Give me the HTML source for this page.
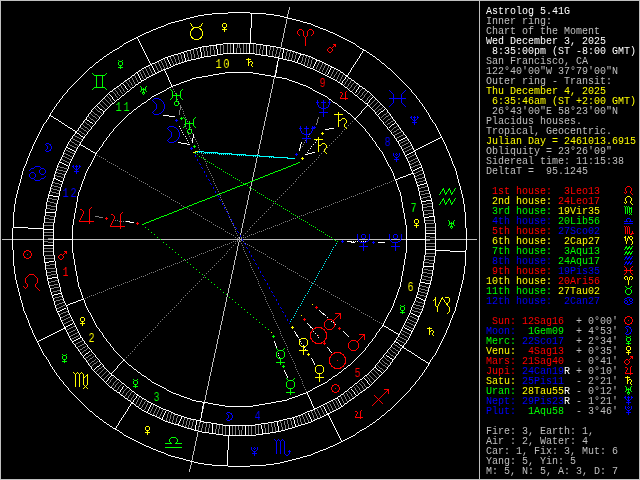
<!DOCTYPE html>
<html><head><meta charset="utf-8"><title>Astrolog 5.41G</title>
<style>
html,body{margin:0;padding:0;background:#000;overflow:hidden}
#w{position:relative;width:640px;height:480px;background:#000;overflow:hidden}
svg{position:absolute;left:0;top:0}
svg path{fill:none;stroke-width:1;shape-rendering:crispEdges}
.h{position:absolute;width:41px;height:17px;line-height:17px;text-align:center;font-family:"Liberation Mono",monospace;font-weight:normal;font-size:13.5px;transform:scaleX(0.75);will-change:transform;letter-spacing:2.5px;text-indent:2.5px}
pre{position:absolute;left:486px;top:7px;margin:0;font-family:"Liberation Mono",monospace;font-size:10px;line-height:10px;color:#bfbfbf;white-space:pre;will-change:transform}
</style></head><body><div id="w">
<svg width="640" height="480" viewBox="0 0 640 480">
<g transform="translate(0,0.5)">
<path stroke="rgb(255,255,255)" d="M228 12h22M212 13h16M250 13h16M204 14h8M251 14h1M266 14h8M198 15h6M251 15h1M274 15h6M194 16h4M251 16h1M280 16h4M190 17h4M251 17h1M284 17h4M186 18h4M251 18h1M288 18h4M183 19h3M251 19h1M292 19h4M179 20h4M251 20h1M296 20h4M175 21h4M251 21h1M300 21h3M171 22h4M251 22h1M303 22h4M168 23h3M251 23h1M307 23h4M166 24h2M251 24h1M311 24h2M164 25h2M251 25h1M313 25h2M161 26h3M251 26h1M315 26h3M158 27h3M251 27h1M318 27h2M156 28h2M250 28h1M320 28h3M153 29h3M250 29h1M323 29h3M151 30h2M250 30h1M326 30h2M149 31h2M250 31h1M328 31h2M146 32h3M250 32h1M330 32h3M144 33h2M250 33h1M333 33h2M142 34h2M250 34h1M335 34h2M140 35h2M250 35h1M337 35h2M138 36h2M250 36h1M339 36h2M136 37h2M250 37h1M341 37h2M134 38h2M137 38h1M250 38h1M343 38h2M132 39h2M138 39h1M250 39h1M345 39h2M130 40h2M138 40h1M250 40h1M347 40h2M128 41h2M139 41h1M250 41h1M349 41h2M126 42h2M139 42h1M250 42h1M351 42h2M124 43h2M140 43h1M223 43h33M353 43h2M123 44h1M140 44h1M216 44h7M233 44h1M249 44h1M256 44h7M355 44h1M122 45h1M141 45h1M209 45h8M233 45h1M249 45h1M263 45h7M356 45h1M120 46h2M141 46h1M202 46h7M216 46h1M233 46h1M249 46h1M266 46h1M270 46h6M357 46h2M119 47h1M142 47h1M198 47h4M216 47h1M233 47h1M249 47h1M266 47h1M276 47h5M359 47h1M117 48h2M142 48h1M194 48h4M200 48h1M216 48h1M233 48h1M249 48h1M266 48h1M281 48h4M360 48h2M115 49h2M143 49h1M191 49h3M200 49h1M217 49h1M233 49h1M249 49h1M266 49h1M283 49h1M285 49h3M362 49h2M113 50h2M143 50h1M187 50h4M200 50h1M217 50h1M233 50h1M249 50h1M266 50h1M283 50h1M288 50h4M363 50h3M112 51h1M144 51h1M184 51h3M200 51h1M217 51h1M233 51h1M249 51h1M266 51h1M283 51h1M292 51h3M362 51h1M366 51h1M110 52h2M144 52h1M181 52h3M201 52h1M217 52h1M233 52h1M249 52h1M266 52h1M283 52h1M295 52h3M362 52h1M367 52h2M109 53h1M145 53h1M178 53h3M183 53h1M201 53h1M217 53h1M223 53h32M266 53h1M282 53h1M298 53h3M361 53h1M369 53h1M107 54h2M145 54h1M174 54h4M184 54h1M201 54h1M217 54h6M255 54h6M266 54h1M282 54h1M300 54h5M360 54h1M370 54h2M106 55h1M146 55h1M171 55h3M184 55h1M201 55h1M211 55h6M261 55h7M282 55h1M300 55h1M305 55h3M360 55h1M372 55h1M104 56h2M146 56h1M168 56h3M184 56h1M201 56h1M204 56h7M268 56h6M282 56h1M299 56h1M308 56h3M359 56h1M373 56h2M103 57h1M147 57h1M165 57h3M184 57h1M200 57h4M274 57h5M282 57h1M299 57h1M311 57h2M359 57h1M375 57h1M102 58h1M147 58h1M163 58h2M167 58h1M185 58h1M196 58h4M278 58h5M298 58h1M313 58h2M358 58h1M376 58h1M100 59h2M148 59h1M161 59h2M167 59h1M185 59h1M191 59h5M278 59h1M283 59h4M298 59h1M315 59h2M357 59h1M377 59h2M99 60h1M148 60h1M159 60h2M168 60h1M185 60h1M187 60h4M278 60h1M287 60h5M297 60h1M316 60h4M357 60h1M379 60h1M98 61h1M149 61h1M157 61h2M168 61h1M184 61h3M277 61h1M292 61h3M297 61h1M316 61h1M320 61h2M356 61h1M380 61h1M96 62h2M149 62h1M155 62h2M169 62h1M181 62h3M277 62h1M295 62h3M315 62h1M322 62h2M355 62h1M381 62h1M95 63h1M150 63h1M152 63h3M169 63h1M178 63h3M277 63h1M298 63h3M315 63h1M324 63h2M355 63h1M382 63h2M94 64h1M150 64h2M170 64h1M175 64h3M277 64h1M301 64h2M314 64h1M326 64h2M354 64h1M384 64h1M93 65h1M148 65h2M151 65h1M170 65h1M173 65h2M277 65h1M303 65h2M314 65h1M328 65h2M353 65h1M385 65h1M92 66h1M146 66h2M152 66h1M171 66h2M277 66h1M305 66h2M313 66h1M330 66h2M353 66h1M386 66h1M90 67h2M144 67h2M152 67h1M169 67h2M276 67h1M307 67h3M313 67h1M331 67h3M352 67h1M387 67h1M89 68h1M142 68h2M153 68h1M166 68h3M276 68h1M310 68h3M330 68h1M334 68h2M351 68h1M388 68h2M88 69h1M141 69h1M153 69h1M163 69h3M276 69h1M313 69h2M330 69h1M336 69h2M351 69h1M390 69h1M87 70h1M139 70h2M154 70h1M161 70h2M164 70h1M276 70h1M315 70h2M329 70h1M338 70h2M350 70h1M391 70h1M86 71h1M138 71h1M154 71h1M159 71h2M165 71h1M276 71h1M317 71h2M329 71h1M340 71h1M350 71h1M392 71h1M85 72h1M136 72h2M155 72h1M157 72h2M165 72h1M225 72h28M276 72h1M319 72h2M328 72h1M341 72h2M349 72h1M393 72h1M84 73h1M135 73h1M137 73h1M155 73h2M166 73h1M219 73h6M253 73h6M275 73h1M321 73h2M328 73h1M343 73h1M348 73h1M394 73h1M83 74h1M134 74h1M138 74h1M153 74h2M166 74h1M213 74h6M259 74h6M275 74h1M323 74h2M327 74h1M344 74h1M348 74h1M395 74h1M82 75h1M132 75h2M138 75h1M151 75h2M167 75h1M208 75h5M265 75h6M275 75h1M325 75h2M345 75h3M396 75h1M81 76h1M131 76h1M139 76h1M149 76h2M167 76h1M202 76h6M271 76h5M327 76h2M346 76h2M397 76h1M80 77h1M130 77h1M139 77h1M147 77h2M168 77h1M196 77h6M276 77h6M329 77h2M345 77h1M348 77h1M398 77h1M79 78h1M128 78h2M140 78h1M146 78h1M168 78h1M192 78h4M282 78h5M331 78h2M345 78h1M349 78h2M399 78h1M78 79h1M127 79h1M140 79h1M144 79h2M168 79h1M190 79h2M287 79h2M333 79h2M344 79h1M351 79h1M400 79h1M77 80h1M125 80h2M141 80h3M169 80h1M187 80h3M289 80h3M335 80h2M343 80h1M352 80h2M401 80h1M76 81h1M124 81h1M141 81h1M169 81h1M184 81h3M292 81h3M337 81h1M342 81h1M354 81h1M402 81h1M75 82h1M123 82h1M139 82h2M170 82h1M181 82h3M295 82h3M338 82h2M342 82h1M355 82h1M403 82h1M74 83h1M121 83h2M138 83h1M170 83h1M179 83h2M298 83h2M340 83h2M356 83h2M404 83h1M73 84h1M120 84h1M123 84h1M136 84h2M171 84h1M176 84h3M300 84h3M341 84h2M358 84h1M405 84h1M72 85h1M119 85h1M124 85h1M135 85h1M171 85h1M173 85h3M303 85h3M343 85h1M359 85h1M406 85h1M71 86h1M117 86h2M125 86h1M134 86h1M171 86h2M306 86h2M344 86h1M359 86h3M407 86h1M70 87h1M116 87h1M125 87h1M132 87h2M169 87h2M308 87h2M345 87h2M358 87h1M362 87h1M408 87h1M69 88h1M114 88h2M126 88h1M131 88h1M167 88h2M310 88h2M347 88h1M358 88h1M363 88h2M409 88h1M68 89h1M113 89h1M127 89h1M130 89h1M166 89h1M312 89h1M348 89h1M357 89h1M365 89h1M410 89h1M67 90h1M112 90h1M129 90h1M164 90h2M313 90h2M349 90h1M356 90h1M366 90h1M411 90h1M67 91h1M110 91h2M127 91h2M162 91h2M315 91h2M350 91h2M356 91h1M367 91h2M411 91h1M66 92h1M109 92h1M126 92h1M160 92h2M317 92h2M352 92h1M355 92h1M369 92h1M412 92h1M65 93h1M108 93h1M125 93h1M158 93h2M319 93h2M353 93h1M370 93h1M413 93h1M64 94h1M107 94h1M109 94h1M124 94h1M156 94h2M321 94h2M354 94h1M371 94h1M414 94h1M63 95h1M106 95h1M110 95h1M122 95h2M154 95h2M323 95h2M355 95h2M372 95h1M415 95h1M62 96h1M105 96h1M111 96h1M121 96h1M152 96h2M325 96h2M357 96h1M373 96h1M416 96h1M62 97h1M104 97h1M112 97h1M120 97h1M151 97h1M327 97h1M358 97h1M372 97h1M374 97h1M416 97h1M61 98h1M103 98h1M112 98h1M119 98h1M150 98h1M328 98h1M359 98h1M371 98h1M375 98h1M417 98h1M60 99h1M102 99h1M113 99h1M117 99h2M148 99h2M329 99h2M360 99h2M370 99h1M376 99h1M418 99h1M59 100h1M101 100h1M114 100h1M116 100h1M147 100h1M331 100h1M362 100h1M369 100h1M377 100h1M419 100h1M59 101h1M100 101h1M115 101h1M146 101h1M332 101h1M363 101h1M369 101h1M378 101h1M419 101h1M58 102h1M99 102h1M114 102h1M144 102h2M333 102h2M364 102h1M368 102h1M379 102h1M420 102h1M57 103h1M98 103h1M112 103h2M142 103h2M335 103h2M365 103h3M380 103h1M421 103h1M56 104h1M97 104h1M111 104h1M141 104h1M337 104h1M367 104h1M381 104h1M422 104h1M56 105h1M96 105h1M110 105h1M140 105h1M338 105h1M367 105h2M382 105h1M422 105h1M55 106h1M95 106h1M97 106h1M109 106h1M138 106h2M339 106h2M366 106h1M369 106h1M383 106h1M423 106h1M54 107h1M94 107h1M98 107h1M108 107h1M137 107h1M341 107h1M365 107h1M370 107h1M384 107h1M424 107h1M54 108h1M93 108h1M99 108h1M107 108h1M136 108h1M342 108h1M364 108h1M371 108h1M385 108h1M424 108h1M53 109h1M92 109h1M100 109h2M106 109h1M134 109h2M343 109h1M363 109h1M372 109h1M384 109h1M386 109h1M425 109h1M52 110h1M91 110h1M102 110h1M105 110h1M133 110h1M344 110h2M362 110h1M373 110h1M383 110h1M387 110h1M426 110h1M52 111h1M91 111h1M103 111h2M132 111h1M346 111h1M361 111h1M374 111h1M381 111h2M387 111h1M426 111h1M51 112h1M90 112h1M103 112h1M131 112h1M347 112h1M361 112h1M375 112h1M380 112h1M388 112h1M427 112h1M50 113h1M89 113h1M103 113h1M129 113h2M348 113h2M360 113h1M375 113h1M379 113h1M389 113h1M428 113h1M50 114h1M88 114h1M102 114h1M128 114h1M350 114h1M359 114h1M376 114h1M378 114h1M390 114h1M428 114h1M49 115h2M88 115h1M101 115h1M127 115h1M163 115h6M351 115h1M358 115h1M377 115h1M390 115h1M429 115h1M49 116h1M51 116h2M87 116h1M100 116h1M126 116h1M169 116h6M352 116h1M357 116h1M378 116h1M391 116h1M429 116h1M48 117h1M53 117h1M86 117h1M99 117h1M125 117h1M353 117h1M356 117h1M379 117h1M392 117h1M430 117h1M48 118h1M54 118h2M86 118h1M99 118h1M124 118h1M354 118h2M379 118h1M392 118h1M430 118h1M47 119h1M56 119h2M85 119h2M98 119h1M123 119h1M355 119h1M380 119h1M393 119h1M431 119h1M46 120h1M58 120h1M84 120h1M87 120h2M97 120h1M122 120h1M356 120h1M381 120h1M394 120h1M432 120h1M46 121h1M59 121h2M83 121h1M89 121h1M96 121h1M121 121h1M357 121h1M382 121h1M395 121h1M432 121h1M45 122h1M61 122h1M83 122h1M90 122h2M95 122h1M120 122h1M358 122h1M383 122h1M395 122h1M433 122h1M44 123h1M62 123h2M82 123h1M92 123h1M95 123h1M119 123h1M359 123h1M383 123h1M394 123h1M396 123h1M434 123h1M43 124h1M64 124h1M81 124h1M94 124h1M118 124h1M360 124h1M384 124h1M392 124h2M397 124h1M435 124h1M43 125h1M65 125h2M80 125h1M93 125h1M117 125h1M361 125h1M385 125h1M391 125h1M398 125h1M435 125h1M42 126h1M67 126h1M80 126h1M92 126h1M116 126h1M179 126h1M362 126h1M386 126h1M390 126h1M398 126h1M436 126h1M42 127h1M68 127h2M79 127h1M91 127h1M115 127h1M363 127h1M387 127h1M389 127h1M399 127h1M436 127h1M41 128h1M70 128h2M78 128h1M91 128h1M114 128h1M180 128h1M329 128h5M364 128h1M387 128h1M400 128h1M437 128h1M41 129h1M72 129h1M78 129h1M90 129h1M113 129h1M325 129h4M365 129h1M388 129h1M400 129h1M437 129h1M40 130h1M73 130h2M77 130h1M89 130h1M113 130h1M181 130h1M365 130h1M389 130h1M401 130h1M438 130h1M40 131h1M75 131h2M88 131h1M112 131h1M366 131h1M390 131h1M402 131h1M438 131h1M39 132h1M75 132h2M87 132h1M111 132h1M182 132h1M367 132h1M391 132h1M403 132h1M439 132h1M39 133h1M75 133h1M77 133h2M87 133h1M110 133h1M368 133h1M391 133h1M403 133h1M439 133h1M38 134h1M74 134h1M79 134h1M86 134h1M109 134h1M183 134h1M193 134h1M369 134h1M392 134h1M404 134h1M440 134h1M38 135h1M73 135h1M80 135h1M85 135h1M109 135h1M193 135h1M369 135h1M393 135h1M405 135h1M440 135h1M37 136h1M72 136h1M81 136h2M84 136h1M108 136h1M185 136h1M193 136h1M370 136h1M394 136h1M406 136h1M441 136h1M37 137h1M72 137h1M83 137h2M107 137h1M193 137h1M371 137h1M394 137h1M405 137h2M440 137h2M36 138h1M71 138h1M83 138h1M106 138h1M186 138h1M192 138h1M372 138h1M395 138h1M403 138h2M407 138h1M438 138h2M442 138h1M36 139h1M70 139h1M82 139h1M106 139h1M192 139h1M372 139h1M396 139h1M401 139h2M408 139h1M436 139h2M442 139h1M35 140h1M70 140h1M82 140h1M105 140h1M187 140h1M192 140h1M316 140h1M373 140h1M396 140h1M399 140h2M408 140h1M434 140h2M443 140h1M35 141h1M69 141h1M81 141h1M104 141h1M192 141h1M374 141h1M397 141h2M409 141h1M432 141h2M443 141h1M34 142h1M68 142h1M80 142h1M103 142h1M178 142h3M188 142h1M192 142h1M301 142h1M315 142h1M375 142h1M398 142h1M410 142h1M430 142h2M444 142h1M34 143h1M68 143h1M80 143h1M103 143h1M181 143h6M301 143h1M375 143h1M398 143h1M410 143h1M428 143h2M444 143h1M33 144h1M67 144h1M79 144h2M102 144h1M187 144h3M300 144h1M313 144h1M376 144h1M399 144h1M411 144h1M426 144h2M445 144h1M33 145h1M67 145h1M79 145h1M81 145h2M102 145h1M300 145h1M376 145h1M399 145h1M411 145h1M424 145h2M445 145h1M32 146h1M66 146h1M78 146h1M83 146h2M101 146h1M300 146h1M311 146h1M377 146h1M400 146h1M412 146h1M422 146h2M446 146h1M32 147h1M66 147h2M77 147h1M85 147h1M100 147h1M300 147h1M378 147h1M401 147h1M412 147h1M420 147h2M446 147h1M32 148h1M65 148h1M68 148h2M77 148h1M86 148h2M99 148h1M299 148h1M310 148h1M379 148h1M401 148h1M413 148h1M418 148h2M446 148h1M31 149h1M65 149h1M70 149h2M76 149h1M88 149h2M99 149h1M299 149h1M379 149h1M402 149h1M413 149h1M416 149h2M447 149h1M31 150h1M64 150h1M72 150h2M76 150h1M90 150h1M98 150h1M299 150h1M308 150h1M380 150h1M402 150h1M414 150h2M447 150h1M30 151h1M64 151h1M74 151h2M91 151h2M97 151h1M381 151h1M403 151h1M413 151h2M448 151h1M30 152h1M63 152h1M75 152h1M93 152h2M96 152h1M307 152h1M312 152h3M382 152h1M403 152h1M411 152h2M415 152h1M448 152h1M29 153h1M63 153h1M74 153h1M95 153h2M308 153h4M382 153h1M404 153h1M409 153h2M415 153h1M449 153h1M29 154h1M63 154h1M74 154h1M95 154h1M305 154h3M383 154h1M404 154h1M407 154h2M415 154h1M449 154h1M29 155h1M62 155h1M73 155h1M95 155h1M383 155h1M405 155h2M416 155h1M449 155h1M28 156h1M62 156h1M73 156h1M94 156h1M384 156h1M405 156h1M416 156h1M450 156h1M28 157h1M61 157h1M72 157h1M94 157h1M384 157h1M406 157h1M417 157h1M450 157h1M27 158h1M61 158h1M72 158h1M93 158h1M385 158h1M406 158h1M417 158h1M451 158h1M27 159h1M60 159h1M71 159h1M93 159h1M385 159h1M407 159h1M418 159h1M451 159h1M27 160h1M60 160h1M71 160h1M92 160h1M386 160h1M407 160h1M418 160h1M451 160h1M26 161h1M59 161h1M70 161h1M92 161h1M386 161h1M408 161h1M419 161h1M452 161h1M26 162h1M59 162h3M70 162h1M91 162h1M387 162h1M408 162h1M419 162h1M452 162h1M26 163h1M58 163h1M62 163h2M69 163h1M91 163h1M387 163h1M409 163h1M420 163h1M452 163h1M25 164h1M58 164h1M64 164h2M69 164h1M90 164h1M388 164h1M409 164h1M420 164h1M453 164h1M25 165h1M57 165h1M66 165h2M69 165h1M90 165h1M388 165h1M409 165h1M421 165h1M453 165h1M24 166h1M57 166h1M68 166h1M89 166h1M389 166h1M410 166h1M421 166h1M454 166h1M24 167h1M57 167h1M68 167h1M88 167h1M390 167h1M410 167h1M419 167h3M454 167h1M23 168h1M56 168h1M68 168h1M88 168h1M390 168h1M410 168h1M417 168h2M422 168h1M455 168h1M23 169h1M56 169h1M67 169h1M87 169h1M391 169h1M411 169h1M415 169h2M422 169h1M455 169h1M23 170h1M56 170h1M67 170h1M87 170h1M391 170h1M411 170h1M413 170h2M422 170h1M455 170h1M22 171h1M55 171h1M66 171h1M86 171h1M392 171h1M412 171h1M423 171h1M456 171h1M22 172h1M55 172h1M66 172h1M86 172h1M392 172h1M412 172h1M423 172h1M456 172h1M22 173h1M55 173h1M65 173h1M85 173h1M393 173h1M411 173h3M423 173h1M456 173h1M22 174h1M54 174h1M65 174h1M85 174h1M393 174h1M408 174h3M413 174h1M424 174h1M456 174h1M21 175h1M54 175h1M64 175h1M85 175h1M393 175h1M406 175h2M414 175h1M424 175h1M457 175h1M21 176h1M54 176h1M64 176h1M84 176h1M394 176h1M403 176h3M414 176h1M424 176h1M457 176h1M21 177h1M54 177h1M64 177h1M84 177h1M394 177h1M400 177h3M414 177h1M424 177h1M457 177h1M21 178h1M53 178h3M63 178h1M84 178h1M394 178h1M398 178h2M415 178h1M425 178h1M457 178h1M20 179h1M53 179h1M56 179h2M63 179h1M83 179h1M395 179h3M415 179h1M425 179h1M458 179h1M20 180h1M53 180h1M58 180h2M63 180h1M83 180h1M395 180h1M415 180h1M425 180h1M458 180h1M20 181h1M52 181h1M60 181h3M82 181h1M396 181h1M416 181h1M426 181h1M458 181h1M20 182h1M52 182h1M62 182h1M82 182h1M396 182h1M416 182h1M426 182h1M458 182h1M19 183h1M52 183h1M62 183h1M82 183h1M396 183h1M416 183h1M424 183h3M459 183h1M19 184h1M51 184h1M61 184h1M81 184h1M397 184h1M417 184h1M420 184h4M427 184h1M459 184h1M19 185h1M51 185h1M61 185h1M81 185h1M397 185h1M417 185h3M427 185h1M459 185h1M18 186h1M51 186h1M61 186h1M81 186h1M397 186h1M417 186h1M427 186h1M460 186h1M18 187h1M50 187h1M60 187h1M80 187h1M398 187h1M418 187h1M428 187h1M460 187h1M18 188h1M50 188h1M60 188h1M80 188h1M398 188h1M418 188h1M428 188h1M460 188h1M18 189h1M50 189h1M60 189h1M80 189h1M398 189h1M418 189h1M428 189h1M460 189h1M17 190h1M50 190h1M60 190h1M79 190h1M399 190h1M418 190h1M428 190h1M461 190h1M17 191h1M49 191h1M59 191h1M79 191h1M399 191h1M419 191h1M429 191h1M461 191h1M17 192h1M49 192h1M59 192h1M78 192h1M400 192h1M419 192h1M429 192h1M461 192h1M17 193h1M49 193h1M59 193h1M78 193h1M400 193h1M419 193h1M429 193h1M461 193h1M16 194h1M48 194h1M59 194h1M78 194h1M400 194h1M419 194h1M430 194h1M462 194h1M16 195h1M48 195h5M59 195h1M78 195h1M400 195h1M419 195h1M430 195h1M462 195h1M16 196h1M48 196h1M53 196h6M77 196h1M401 196h1M420 196h1M430 196h1M462 196h1M16 197h1M48 197h1M58 197h1M77 197h1M401 197h1M420 197h1M430 197h1M462 197h1M15 198h1M47 198h1M58 198h1M77 198h1M401 198h1M420 198h1M431 198h1M463 198h1M15 199h1M47 199h1M58 199h1M77 199h1M401 199h1M420 199h1M431 199h1M463 199h1M15 200h1M47 200h1M57 200h1M77 200h1M401 200h1M421 200h1M426 200h6M463 200h1M15 201h1M47 201h1M57 201h1M77 201h1M401 201h1M421 201h5M431 201h1M463 201h1M15 202h1M46 202h1M57 202h1M76 202h1M402 202h1M421 202h1M432 202h1M463 202h1M15 203h1M46 203h1M57 203h1M76 203h1M402 203h1M421 203h1M432 203h1M463 203h1M14 204h1M46 204h1M56 204h1M76 204h1M402 204h1M422 204h1M432 204h1M464 204h1M14 205h1M46 205h1M56 205h1M76 205h1M402 205h1M422 205h1M432 205h1M464 205h1M14 206h1M46 206h1M56 206h1M76 206h1M402 206h1M422 206h1M432 206h1M464 206h1M14 207h1M46 207h1M56 207h1M76 207h1M402 207h1M422 207h1M432 207h1M464 207h1M14 208h1M46 208h1M56 208h1M75 208h1M403 208h1M422 208h1M432 208h1M464 208h1M14 209h1M45 209h1M56 209h1M75 209h1M403 209h1M422 209h1M433 209h1M464 209h1M14 210h1M45 210h1M56 210h1M75 210h1M403 210h1M422 210h1M433 210h1M464 210h1M14 211h1M45 211h1M55 211h1M75 211h1M403 211h1M423 211h1M433 211h1M464 211h1M13 212h1M45 212h11M75 212h1M403 212h1M423 212h1M433 212h1M465 212h1M13 213h1M45 213h1M55 213h1M74 213h1M404 213h1M423 213h1M433 213h1M465 213h1M13 214h1M45 214h1M55 214h1M74 214h1M404 214h1M423 214h1M433 214h1M465 214h1M13 215h1M45 215h1M55 215h1M74 215h1M404 215h1M423 215h1M433 215h1M465 215h1M13 216h1M44 216h1M55 216h1M74 216h1M404 216h1M423 216h1M429 216h6M465 216h1M13 217h1M44 217h1M54 217h1M74 217h1M404 217h1M424 217h5M434 217h1M465 217h1M13 218h1M44 218h1M54 218h1M74 218h1M404 218h1M424 218h1M434 218h1M465 218h1M13 219h1M44 219h1M54 219h1M73 219h1M405 219h1M424 219h1M434 219h1M465 219h1M13 220h1M44 220h1M54 220h1M73 220h1M405 220h1M424 220h1M434 220h1M465 220h1M13 221h1M44 221h1M54 221h1M73 221h1M126 221h4M405 221h1M424 221h1M434 221h1M465 221h1M13 222h1M44 222h1M54 222h1M73 222h1M130 222h4M405 222h1M424 222h1M434 222h1M465 222h1M13 223h1M43 223h1M53 223h1M73 223h1M405 223h1M425 223h1M435 223h1M465 223h1M13 224h1M43 224h1M53 224h1M73 224h1M405 224h1M425 224h1M435 224h1M465 224h1M13 225h1M43 225h1M53 225h1M72 225h1M406 225h1M425 225h1M435 225h1M465 225h1M13 226h1M43 226h1M53 226h1M72 226h1M406 226h1M425 226h1M435 226h1M465 226h1M13 227h15M43 227h1M53 227h1M72 227h1M406 227h1M425 227h1M435 227h1M465 227h1M12 228h1M28 228h16M53 228h1M72 228h1M406 228h1M425 228h1M435 228h1M466 228h1M12 229h1M43 229h11M72 229h1M406 229h1M425 229h1M435 229h1M466 229h1M12 230h1M43 230h1M53 230h1M72 230h1M406 230h1M425 230h1M435 230h1M466 230h1M12 231h1M43 231h1M53 231h1M72 231h1M406 231h1M425 231h1M435 231h1M466 231h1M12 232h1M43 232h1M53 232h1M72 232h1M406 232h1M425 232h1M435 232h1M466 232h1M12 233h1M43 233h1M53 233h1M72 233h1M406 233h1M425 233h11M466 233h1M12 234h1M43 234h1M53 234h1M72 234h1M406 234h1M425 234h1M435 234h1M466 234h1M12 235h1M43 235h1M53 235h1M72 235h1M406 235h1M425 235h1M435 235h1M466 235h1M12 236h1M43 236h1M53 236h1M72 236h1M406 236h1M425 236h1M435 236h1M466 236h1M12 237h1M43 237h1M53 237h1M72 237h1M406 237h1M425 237h1M435 237h1M466 237h1M12 238h1M43 238h1M53 238h1M72 238h1M406 238h1M425 238h1M435 238h1M466 238h1M12 239h1M43 239h1M53 239h20M406 239h20M435 239h1M466 239h1M12 240h1M43 240h1M53 240h1M72 240h1M406 240h1M425 240h1M435 240h1M466 240h1M12 241h1M43 241h1M53 241h1M72 241h1M347 241h5M353 241h1M355 241h1M357 241h1M361 241h1M363 241h1M365 241h1M406 241h1M425 241h1M435 241h1M466 241h1M12 242h1M43 242h1M53 242h1M72 242h1M351 242h4M378 242h7M406 242h1M425 242h1M435 242h1M466 242h1M12 243h1M43 243h1M53 243h1M72 243h1M406 243h1M425 243h1M435 243h1M466 243h1M12 244h1M43 244h1M53 244h1M72 244h1M406 244h1M425 244h1M435 244h1M466 244h1M12 245h1M43 245h11M72 245h1M406 245h1M425 245h1M435 245h1M466 245h1M12 246h1M43 246h1M53 246h1M72 246h1M406 246h1M425 246h1M435 246h1M466 246h1M12 247h1M43 247h1M53 247h1M72 247h1M406 247h1M425 247h1M435 247h1M466 247h1M12 248h1M43 248h1M53 248h1M72 248h1M406 248h1M425 248h1M435 248h1M466 248h1M12 249h1M43 249h1M53 249h1M72 249h1M406 249h1M425 249h11M466 249h1M13 250h1M43 250h1M53 250h1M72 250h1M406 250h1M425 250h1M435 250h15M465 250h1M13 251h1M43 251h1M53 251h1M72 251h1M406 251h1M425 251h1M435 251h1M450 251h16M13 252h1M43 252h1M53 252h1M72 252h1M406 252h1M425 252h1M435 252h1M465 252h1M13 253h1M43 253h1M53 253h1M73 253h1M405 253h1M425 253h1M435 253h1M465 253h1M13 254h1M43 254h1M53 254h1M73 254h1M405 254h1M425 254h1M435 254h1M465 254h1M13 255h1M43 255h1M54 255h1M73 255h1M405 255h1M424 255h1M435 255h1M465 255h1M13 256h1M44 256h1M54 256h1M73 256h1M405 256h1M424 256h1M434 256h1M465 256h1M13 257h1M44 257h1M54 257h1M73 257h1M405 257h1M424 257h1M434 257h1M465 257h1M13 258h1M44 258h1M54 258h1M73 258h1M405 258h1M424 258h1M434 258h1M465 258h1M13 259h1M44 259h1M54 259h1M74 259h1M404 259h1M424 259h1M434 259h1M465 259h1M13 260h1M44 260h1M54 260h1M74 260h1M404 260h1M424 260h1M434 260h1M465 260h1M13 261h1M44 261h1M49 261h5M55 261h1M74 261h1M404 261h1M423 261h1M434 261h1M465 261h1M13 262h1M44 262h5M55 262h1M74 262h1M404 262h1M423 262h1M434 262h1M465 262h1M13 263h1M45 263h1M55 263h1M74 263h1M404 263h1M423 263h1M433 263h1M465 263h1M13 264h1M45 264h1M55 264h1M74 264h1M404 264h1M423 264h1M433 264h1M465 264h1M13 265h1M45 265h1M55 265h1M75 265h1M403 265h1M423 265h1M433 265h1M465 265h1M14 266h1M45 266h1M55 266h1M75 266h1M403 266h1M423 266h11M464 266h1M14 267h1M45 267h1M55 267h1M75 267h1M403 267h1M423 267h1M433 267h1M464 267h1M14 268h1M45 268h1M56 268h1M75 268h1M403 268h1M422 268h1M433 268h1M464 268h1M14 269h1M45 269h1M56 269h1M75 269h1M403 269h1M422 269h1M433 269h1M464 269h1M14 270h1M46 270h1M56 270h1M75 270h1M403 270h1M422 270h1M432 270h1M464 270h1M14 271h1M46 271h1M56 271h1M76 271h1M402 271h1M422 271h1M432 271h1M464 271h1M14 272h1M46 272h1M56 272h1M76 272h1M402 272h1M422 272h1M432 272h1M464 272h1M14 273h1M46 273h1M56 273h1M76 273h1M402 273h1M422 273h1M432 273h1M464 273h1M15 274h1M46 274h1M57 274h1M76 274h1M402 274h1M421 274h1M432 274h1M463 274h1M15 275h1M46 275h1M57 275h1M76 275h1M402 275h1M421 275h1M432 275h1M463 275h1M15 276h1M47 276h1M57 276h1M77 276h1M401 276h1M421 276h1M431 276h1M463 276h1M15 277h1M47 277h1M52 277h6M77 277h1M401 277h1M421 277h1M431 277h1M463 277h1M15 278h1M47 278h5M57 278h1M77 278h1M401 278h1M421 278h1M431 278h1M463 278h1M15 279h1M47 279h1M58 279h1M77 279h1M401 279h1M420 279h1M431 279h1M463 279h1M16 280h1M47 280h1M58 280h1M77 280h1M401 280h1M420 280h1M431 280h1M462 280h1M16 281h1M48 281h1M58 281h1M77 281h1M401 281h1M420 281h1M430 281h1M462 281h1M16 282h1M48 282h1M58 282h1M78 282h1M400 282h1M420 282h5M430 282h1M462 282h1M16 283h1M48 283h1M59 283h1M78 283h1M400 283h1M419 283h1M425 283h6M462 283h1M17 284h1M48 284h1M59 284h1M78 284h1M400 284h1M419 284h1M430 284h1M461 284h1M17 285h1M49 285h1M59 285h1M78 285h1M400 285h1M419 285h1M429 285h1M461 285h1M17 286h1M49 286h1M59 286h1M78 286h1M400 286h1M419 286h1M429 286h1M461 286h1M17 287h1M49 287h1M60 287h1M79 287h1M399 287h1M418 287h1M429 287h1M461 287h1M18 288h1M50 288h1M60 288h1M79 288h1M399 288h1M418 288h1M428 288h1M460 288h1M18 289h1M50 289h1M60 289h1M80 289h1M398 289h1M418 289h1M428 289h1M460 289h1M18 290h1M50 290h1M60 290h1M80 290h1M398 290h1M418 290h1M428 290h1M460 290h1M18 291h1M50 291h1M60 291h1M80 291h1M398 291h1M418 291h1M428 291h1M460 291h1M19 292h1M51 292h1M61 292h1M81 292h1M397 292h1M417 292h1M427 292h1M459 292h1M19 293h1M51 293h1M58 293h4M81 293h1M397 293h1M417 293h1M427 293h1M459 293h1M19 294h1M51 294h1M54 294h4M61 294h1M81 294h1M397 294h1M417 294h1M427 294h1M459 294h1M19 295h1M52 295h2M62 295h1M82 295h1M396 295h1M416 295h1M426 295h1M459 295h1M20 296h1M52 296h1M62 296h1M82 296h1M396 296h1M416 296h1M426 296h1M458 296h1M20 297h1M52 297h1M62 297h1M82 297h1M396 297h1M416 297h3M426 297h1M458 297h1M20 298h1M53 298h1M63 298h1M83 298h1M395 298h1M415 298h1M419 298h2M425 298h1M458 298h1M20 299h1M53 299h1M63 299h1M81 299h3M395 299h1M415 299h1M421 299h2M425 299h1M458 299h1M21 300h1M53 300h1M63 300h1M78 300h3M84 300h1M394 300h1M415 300h1M423 300h3M457 300h1M21 301h1M54 301h1M64 301h1M76 301h2M84 301h1M394 301h1M414 301h1M424 301h1M457 301h1M21 302h1M54 302h1M64 302h1M73 302h3M84 302h1M394 302h1M414 302h1M424 302h1M457 302h1M22 303h1M54 303h1M65 303h1M70 303h3M85 303h1M393 303h1M413 303h1M424 303h1M456 303h1M22 304h1M54 304h1M65 304h1M68 304h2M85 304h1M393 304h1M413 304h1M424 304h1M456 304h1M22 305h1M55 305h1M66 305h2M85 305h1M393 305h1M412 305h1M423 305h1M456 305h1M22 306h1M55 306h1M66 306h1M86 306h1M392 306h1M412 306h1M423 306h1M456 306h1M23 307h1M55 307h1M67 307h1M86 307h1M392 307h1M411 307h1M423 307h1M455 307h1M23 308h1M56 308h1M64 308h2M67 308h1M87 308h1M391 308h1M411 308h1M422 308h1M455 308h1M23 309h1M56 309h1M62 309h2M67 309h1M87 309h1M391 309h1M411 309h1M422 309h1M455 309h1M23 310h1M56 310h1M60 310h2M68 310h1M88 310h1M319 310h1M390 310h1M410 310h1M422 310h1M455 310h1M24 311h1M57 311h3M68 311h1M88 311h1M320 311h1M390 311h1M410 311h1M421 311h1M454 311h1M24 312h1M57 312h1M68 312h1M89 312h1M321 312h1M389 312h1M410 312h1M421 312h1M454 312h1M25 313h1M58 313h1M69 313h1M90 313h1M322 313h2M388 313h1M409 313h1M411 313h2M420 313h1M453 313h1M25 314h1M58 314h1M69 314h1M90 314h1M323 314h2M388 314h1M409 314h1M413 314h2M420 314h1M453 314h1M26 315h1M59 315h1M70 315h1M91 315h1M325 315h1M387 315h1M408 315h1M415 315h2M419 315h1M452 315h1M26 316h1M59 316h1M70 316h1M91 316h1M387 316h1M408 316h1M417 316h3M452 316h1M26 317h1M60 317h1M71 317h1M92 317h1M327 317h1M386 317h1M407 317h1M418 317h1M452 317h1M27 318h1M60 318h1M71 318h1M92 318h1M386 318h1M407 318h1M418 318h1M451 318h1M27 319h1M60 319h1M72 319h1M93 319h1M385 319h1M406 319h1M418 319h1M451 319h1M28 320h1M61 320h1M72 320h1M93 320h1M385 320h1M406 320h1M417 320h1M450 320h1M28 321h1M61 321h1M73 321h1M94 321h1M331 321h1M384 321h1M405 321h1M417 321h1M450 321h1M28 322h1M62 322h1M73 322h1M94 322h1M333 322h1M384 322h1M405 322h1M416 322h1M450 322h1M29 323h1M62 323h1M72 323h1M74 323h1M95 323h1M307 323h1M383 323h1M404 323h1M416 323h1M449 323h1M29 324h1M63 324h1M70 324h2M74 324h1M95 324h1M308 324h1M335 324h1M383 324h1M404 324h1M415 324h1M449 324h1M29 325h1M63 325h1M68 325h2M75 325h1M96 325h1M309 325h1M382 325h2M403 325h1M415 325h1M449 325h1M30 326h1M64 326h1M66 326h2M75 326h1M96 326h1M310 326h1M382 326h1M384 326h2M403 326h1M414 326h1M448 326h1M30 327h1M64 327h2M76 327h1M97 327h1M310 327h2M381 327h1M386 327h2M402 327h1M404 327h1M414 327h1M448 327h1M31 328h1M63 328h3M76 328h1M98 328h1M312 328h1M380 328h1M388 328h1M402 328h1M405 328h2M413 328h1M447 328h1M31 329h1M61 329h2M65 329h1M77 329h1M99 329h1M379 329h1M389 329h2M401 329h1M407 329h2M413 329h1M447 329h1M32 330h1M59 330h2M66 330h1M77 330h1M99 330h1M379 330h1M391 330h2M401 330h1M409 330h2M412 330h1M446 330h1M32 331h1M57 331h2M66 331h1M78 331h1M100 331h1M294 331h1M313 331h1M343 331h1M378 331h1M393 331h1M400 331h1M411 331h2M446 331h1M32 332h1M55 332h2M67 332h1M78 332h1M101 332h1M295 332h1M344 332h1M377 332h1M394 332h2M400 332h1M411 332h1M446 332h1M33 333h1M53 333h2M67 333h1M79 333h1M102 333h1M295 333h1M315 333h1M345 333h1M376 333h1M396 333h2M399 333h1M411 333h1M445 333h1M33 334h1M51 334h2M68 334h1M79 334h1M102 334h1M296 334h1M346 334h1M376 334h1M398 334h2M410 334h1M445 334h1M34 335h1M49 335h2M68 335h1M80 335h1M103 335h1M296 335h2M317 335h1M347 335h1M375 335h1M398 335h1M410 335h1M444 335h1M34 336h1M47 336h2M69 336h1M80 336h1M103 336h1M297 336h1M348 336h1M375 336h1M398 336h1M409 336h1M444 336h1M35 337h1M45 337h2M69 337h1M80 337h2M104 337h1M298 337h1M318 337h1M374 337h1M397 337h1M409 337h1M443 337h1M35 338h1M43 338h2M70 338h1M78 338h2M82 338h1M105 338h1M373 338h1M396 338h1M408 338h1M443 338h1M36 339h1M41 339h2M70 339h1M76 339h2M82 339h1M106 339h1M299 339h1M372 339h1M396 339h1M408 339h1M442 339h1M36 340h1M39 340h2M71 340h1M74 340h2M83 340h1M106 340h1M372 340h1M395 340h1M407 340h1M442 340h1M37 341h2M72 341h2M84 341h1M107 341h1M274 341h1M300 341h1M371 341h1M394 341h2M406 341h1M441 341h1M37 342h1M72 342h1M84 342h1M108 342h1M274 342h1M370 342h1M394 342h1M396 342h2M406 342h1M441 342h1M38 343h1M73 343h1M85 343h1M109 343h1M275 343h1M301 343h1M369 343h1M393 343h1M398 343h1M405 343h1M440 343h1M38 344h1M74 344h1M86 344h1M110 344h1M275 344h1M368 344h1M392 344h1M399 344h1M404 344h1M440 344h1M39 345h1M75 345h1M87 345h1M110 345h1M275 345h1M303 345h1M368 345h1M391 345h1M400 345h2M403 345h1M439 345h1M39 346h1M75 346h1M87 346h1M111 346h1M276 346h1M367 346h1M391 346h1M402 346h2M439 346h1M40 347h1M76 347h1M88 347h1M112 347h1M276 347h1M304 347h1M327 347h1M366 347h1M390 347h1M402 347h2M438 347h1M40 348h1M77 348h1M89 348h1M113 348h1M328 348h1M365 348h1M389 348h1M401 348h1M404 348h2M438 348h1M41 349h1M78 349h1M90 349h1M113 349h1M305 349h1M329 349h1M365 349h1M388 349h1M400 349h1M406 349h1M437 349h1M41 350h1M78 350h1M91 350h1M114 350h1M329 350h1M364 350h1M387 350h1M400 350h1M407 350h2M437 350h1M42 351h1M79 351h1M89 351h1M91 351h1M115 351h1M330 351h1M363 351h1M387 351h1M399 351h1M409 351h2M436 351h1M42 352h1M80 352h1M88 352h1M92 352h1M116 352h1M331 352h1M362 352h1M386 352h1M398 352h1M411 352h1M436 352h1M43 353h1M80 353h1M86 353h2M93 353h1M117 353h1M278 353h1M361 353h1M385 353h1M398 353h1M412 353h2M435 353h1M43 354h1M81 354h1M85 354h1M94 354h1M118 354h1M360 354h1M384 354h1M397 354h1M414 354h1M435 354h1M44 355h1M82 355h1M84 355h1M95 355h1M119 355h1M278 355h1M359 355h1M383 355h1M386 355h1M396 355h1M415 355h2M434 355h1M45 356h1M83 356h1M95 356h1M120 356h1M358 356h1M383 356h1M387 356h2M395 356h1M417 356h1M433 356h1M46 357h1M83 357h1M96 357h1M121 357h1M279 357h1M357 357h1M382 357h1M389 357h1M395 357h1M418 357h2M432 357h1M46 358h1M84 358h1M97 358h1M122 358h1M311 358h1M356 358h1M381 358h1M390 358h2M394 358h1M420 358h1M432 358h1M47 359h1M85 359h1M98 359h1M123 359h1M312 359h1M355 359h1M380 359h1M392 359h2M421 359h2M431 359h1M48 360h1M86 360h1M99 360h1M123 360h2M312 360h1M354 360h1M379 360h1M392 360h1M423 360h2M430 360h1M48 361h1M86 361h1M99 361h1M122 361h1M125 361h1M313 361h1M353 361h1M379 361h1M392 361h1M425 361h1M430 361h1M49 362h1M87 362h1M100 362h1M121 362h1M126 362h1M313 362h1M352 362h1M378 362h1M391 362h1M426 362h2M429 362h1M49 363h1M88 363h1M101 363h1M120 363h1M127 363h1M314 363h1M351 363h1M377 363h1M390 363h1M428 363h2M50 364h1M88 364h1M100 364h1M102 364h1M119 364h1M128 364h1M314 364h1M350 364h1M376 364h1M390 364h1M428 364h1M50 365h1M89 365h1M99 365h1M103 365h1M118 365h1M129 365h2M348 365h2M375 365h1M389 365h1M428 365h1M51 366h1M90 366h1M97 366h2M103 366h1M117 366h1M131 366h1M347 366h1M375 366h1M388 366h1M427 366h1M52 367h1M91 367h1M96 367h1M104 367h1M117 367h1M132 367h1M346 367h1M374 367h2M387 367h1M426 367h1M52 368h1M91 368h1M95 368h1M105 368h1M116 368h1M133 368h1M344 368h2M373 368h1M376 368h1M387 368h1M426 368h1M53 369h1M92 369h1M94 369h1M106 369h1M115 369h1M134 369h2M343 369h1M372 369h1M377 369h1M386 369h1M425 369h1M54 370h1M93 370h1M107 370h1M114 370h1M136 370h1M284 370h1M342 370h1M371 370h1M378 370h2M385 370h1M424 370h1M54 371h1M94 371h1M108 371h1M113 371h1M137 371h1M284 371h1M341 371h1M370 371h1M380 371h1M384 371h1M424 371h1M55 372h1M95 372h1M109 372h1M112 372h1M138 372h2M285 372h1M339 372h2M369 372h1M381 372h1M383 372h1M423 372h1M56 373h1M96 373h1M110 373h2M140 373h1M285 373h1M338 373h1M368 373h1M382 373h1M422 373h1M56 374h1M97 374h1M111 374h1M141 374h1M286 374h1M337 374h1M367 374h1M381 374h1M422 374h1M57 375h1M98 375h1M111 375h3M142 375h2M286 375h1M335 375h2M365 375h2M380 375h1M421 375h1M58 376h1M99 376h1M110 376h1M114 376h1M144 376h2M287 376h1M333 376h2M364 376h1M379 376h1M420 376h1M59 377h1M100 377h1M109 377h1M115 377h1M146 377h1M287 377h1M332 377h1M363 377h1M378 377h1M419 377h1M59 378h1M101 378h1M108 378h1M116 378h1M147 378h1M331 378h1M362 378h1M364 378h1M377 378h1M419 378h1M60 379h1M102 379h1M108 379h1M117 379h2M148 379h2M329 379h2M360 379h2M365 379h1M376 379h1M418 379h1M61 380h1M103 380h1M107 380h1M119 380h1M150 380h1M328 380h1M359 380h1M366 380h1M375 380h1M417 380h1M62 381h1M104 381h1M106 381h1M120 381h1M151 381h1M327 381h1M358 381h1M367 381h1M374 381h1M416 381h1M63 382h1M105 382h1M121 382h1M152 382h2M325 382h2M357 382h1M367 382h1M373 382h1M415 382h1M63 383h1M106 383h1M122 383h2M154 383h2M323 383h2M355 383h2M368 383h1M372 383h1M415 383h1M64 384h1M107 384h1M124 384h1M156 384h2M321 384h2M354 384h1M369 384h1M371 384h1M414 384h1M65 385h1M108 385h1M125 385h1M158 385h2M319 385h2M353 385h1M370 385h1M413 385h1M66 386h1M109 386h1M123 386h1M126 386h1M160 386h2M317 386h2M352 386h1M369 386h1M412 386h1M67 387h1M110 387h2M122 387h1M127 387h2M162 387h2M315 387h2M350 387h2M367 387h2M411 387h1M68 388h1M112 388h1M122 388h1M129 388h1M164 388h2M313 388h2M349 388h1M366 388h1M410 388h1M68 389h1M113 389h1M121 389h1M130 389h1M166 389h1M312 389h1M348 389h1M351 389h1M365 389h1M410 389h1M69 390h1M114 390h2M120 390h1M131 390h1M167 390h2M310 390h2M347 390h1M352 390h1M363 390h2M409 390h1M70 391h1M116 391h1M120 391h1M132 391h2M169 391h2M308 391h2M345 391h2M353 391h1M362 391h1M408 391h1M71 392h1M117 392h3M134 392h1M171 392h2M306 392h2M344 392h1M354 392h1M360 392h2M407 392h1M72 393h1M119 393h1M135 393h1M173 393h3M303 393h3M307 393h1M343 393h1M354 393h1M359 393h1M406 393h1M73 394h1M120 394h1M136 394h2M176 394h3M300 394h3M307 394h1M341 394h2M355 394h1M358 394h1M405 394h1M74 395h1M121 395h2M137 395h2M179 395h2M298 395h2M308 395h1M340 395h1M356 395h2M404 395h1M75 396h1M123 396h1M136 396h1M139 396h2M181 396h3M295 396h3M308 396h1M338 396h2M355 396h1M403 396h1M76 397h1M124 397h1M136 397h1M141 397h1M184 397h3M292 397h3M309 397h1M337 397h1M354 397h1M402 397h1M77 398h1M125 398h2M135 398h1M142 398h2M187 398h3M289 398h3M309 398h1M335 398h3M352 398h2M401 398h1M78 399h1M127 399h1M134 399h1M144 399h2M190 399h2M287 399h2M310 399h1M333 399h2M338 399h1M351 399h1M400 399h1M79 400h1M128 400h2M133 400h1M146 400h1M192 400h4M282 400h5M310 400h1M331 400h2M338 400h1M349 400h2M399 400h1M80 401h1M130 401h1M133 401h1M147 401h2M196 401h6M276 401h6M311 401h1M329 401h2M339 401h1M348 401h1M398 401h1M81 402h1M131 402h2M149 402h2M202 402h6M271 402h5M311 402h1M327 402h2M339 402h1M347 402h1M397 402h1M82 403h1M131 403h3M151 403h2M203 403h1M208 403h5M265 403h6M311 403h1M325 403h2M340 403h1M345 403h2M396 403h1M83 404h1M130 404h1M134 404h1M151 404h1M153 404h2M203 404h1M213 404h6M259 404h6M312 404h1M323 404h2M340 404h1M344 404h1M395 404h1M84 405h1M130 405h1M135 405h1M150 405h1M155 405h2M203 405h1M219 405h6M253 405h6M312 405h1M321 405h2M341 405h1M343 405h1M394 405h1M85 406h1M129 406h1M136 406h2M150 406h1M157 406h2M202 406h1M225 406h28M313 406h1M319 406h2M323 406h1M341 406h2M393 406h1M86 407h1M128 407h1M138 407h1M149 407h1M159 407h2M202 407h1M313 407h1M317 407h2M324 407h1M340 407h1M392 407h1M87 408h1M128 408h1M139 408h2M149 408h1M161 408h2M202 408h1M314 408h3M324 408h1M338 408h2M391 408h1M88 409h1M127 409h1M141 409h1M148 409h1M163 409h3M202 409h1M313 409h2M325 409h1M336 409h2M390 409h1M89 410h1M127 410h1M142 410h2M148 410h1M166 410h3M202 410h1M310 410h3M325 410h1M334 410h2M388 410h2M90 411h2M126 411h1M144 411h2M147 411h1M165 411h1M169 411h2M202 411h1M307 411h3M326 411h1M332 411h2M387 411h1M92 412h1M125 412h1M146 412h2M165 412h1M171 412h2M201 412h1M305 412h2M326 412h1M330 412h2M386 412h1M93 413h1M125 413h1M148 413h2M164 413h1M173 413h2M201 413h1M303 413h2M308 413h1M327 413h3M385 413h1M94 414h1M124 414h1M150 414h2M164 414h1M175 414h3M201 414h1M301 414h2M308 414h1M326 414h3M384 414h1M95 415h1M123 415h1M152 415h3M163 415h1M178 415h3M201 415h1M298 415h3M309 415h1M324 415h2M328 415h1M382 415h2M96 416h2M123 416h1M155 416h2M163 416h1M181 416h3M201 416h1M295 416h3M309 416h1M322 416h2M329 416h1M381 416h1M98 417h1M122 417h1M157 417h2M162 417h1M181 417h1M184 417h3M201 417h1M292 417h3M310 417h1M320 417h2M329 417h1M380 417h1M99 418h1M121 418h1M159 418h2M162 418h1M181 418h1M187 418h4M200 418h1M287 418h5M293 418h1M310 418h1M317 418h3M330 418h1M379 418h1M100 419h2M121 419h1M161 419h2M180 419h1M191 419h5M200 419h1M283 419h4M293 419h1M311 419h1M315 419h2M330 419h1M377 419h2M102 420h1M120 420h1M163 420h2M180 420h1M196 420h5M279 420h4M294 420h1M311 420h1M313 420h2M331 420h1M376 420h1M103 421h1M119 421h1M165 421h3M179 421h1M196 421h1M200 421h4M274 421h5M294 421h1M311 421h2M331 421h1M375 421h1M104 422h2M119 422h1M168 422h3M179 422h1M196 422h1M204 422h7M268 422h6M277 422h1M294 422h1M308 422h3M332 422h1M373 422h2M106 423h1M118 423h1M171 423h3M178 423h1M196 423h1M211 423h6M261 423h7M277 423h1M294 423h1M305 423h3M332 423h1M372 423h1M107 424h2M118 424h1M174 424h5M196 424h1M212 424h1M217 424h6M255 424h6M277 424h1M295 424h1M301 424h4M333 424h1M370 424h2M109 425h1M117 425h1M178 425h3M195 425h1M212 425h1M223 425h32M261 425h1M277 425h1M295 425h1M298 425h3M333 425h1M369 425h1M110 426h2M116 426h1M181 426h3M195 426h1M212 426h1M229 426h1M245 426h1M261 426h1M278 426h1M295 426h3M334 426h1M367 426h2M112 427h1M116 427h1M184 427h3M195 427h1M212 427h1M229 427h1M245 427h1M261 427h1M278 427h1M292 427h3M334 427h1M366 427h1M113 428h3M187 428h4M195 428h1M212 428h1M229 428h1M245 428h1M261 428h1M278 428h1M288 428h4M335 428h1M364 428h2M115 429h2M191 429h3M195 429h1M212 429h1M229 429h1M245 429h1M262 429h1M278 429h1M285 429h3M335 429h1M362 429h2M117 430h2M194 430h4M212 430h1M229 430h1M245 430h1M262 430h1M278 430h1M281 430h4M336 430h1M360 430h2M119 431h1M198 431h4M212 431h1M229 431h1M245 431h1M262 431h1M276 431h5M336 431h1M359 431h1M120 432h2M202 432h7M212 432h1M229 432h1M245 432h1M262 432h1M270 432h6M337 432h1M357 432h2M122 433h1M209 433h7M229 433h1M245 433h1M262 433h8M337 433h1M356 433h1M123 434h1M216 434h7M229 434h1M245 434h1M256 434h7M338 434h1M355 434h1M124 435h2M223 435h33M338 435h1M353 435h2M126 436h2M228 436h1M339 436h1M351 436h2M128 437h2M228 437h1M339 437h1M349 437h2M130 438h2M228 438h1M340 438h1M347 438h2M132 439h2M228 439h1M340 439h1M345 439h2M134 440h2M228 440h1M341 440h1M343 440h2M136 441h2M228 441h1M341 441h2M138 442h2M228 442h1M339 442h2M140 443h2M228 443h1M337 443h2M142 444h2M228 444h1M335 444h2M144 445h2M228 445h1M333 445h2M146 446h3M228 446h1M330 446h3M149 447h2M228 447h1M328 447h2M151 448h2M228 448h1M326 448h2M153 449h3M228 449h1M323 449h3M156 450h2M227 450h1M320 450h3M158 451h3M227 451h1M318 451h2M161 452h3M227 452h1M315 452h3M164 453h2M227 453h1M313 453h2M166 454h2M227 454h1M311 454h2M168 455h3M227 455h1M307 455h4M171 456h4M227 456h1M303 456h4M175 457h4M227 457h1M300 457h3M179 458h4M227 458h1M296 458h4M183 459h3M227 459h1M292 459h4M186 460h4M227 460h1M288 460h4M190 461h4M227 461h1M284 461h4M194 462h4M227 462h1M280 462h4M198 463h6M227 463h1M274 463h6M204 464h8M227 464h1M266 464h8M212 465h16M250 465h16M228 466h22"/>
<path stroke="rgb(191,191,191)" d="M0 0h640M0 1h1M479 1h1M639 1h1M0 2h1M479 2h1M639 2h1M0 3h1M479 3h1M639 3h1M0 4h1M479 4h1M639 4h1M0 5h1M479 5h1M639 5h1M0 6h1M479 6h1M639 6h1M0 7h1M289 7h1M479 7h1M639 7h1M0 8h1M289 8h1M479 8h1M639 8h1M0 9h1M289 9h1M479 9h1M639 9h1M0 10h1M288 10h1M479 10h1M639 10h1M0 11h1M288 11h1M479 11h1M639 11h1M0 12h1M288 12h1M479 12h1M639 12h1M0 13h1M288 13h1M479 13h1M639 13h1M0 14h1M287 14h1M479 14h1M639 14h1M0 15h1M287 15h1M479 15h1M639 15h1M0 16h1M287 16h1M479 16h1M639 16h1M0 17h1M479 17h1M639 17h1M0 18h1M287 18h1M479 18h1M639 18h1M0 19h1M286 19h1M479 19h1M639 19h1M0 20h1M286 20h1M479 20h1M639 20h1M0 21h1M286 21h1M479 21h1M639 21h1M0 22h1M286 22h1M479 22h1M639 22h1M0 23h1M286 23h1M479 23h1M639 23h1M0 24h1M285 24h1M479 24h1M639 24h1M0 25h1M285 25h1M479 25h1M639 25h1M0 26h1M285 26h1M479 26h1M639 26h1M0 27h1M285 27h1M479 27h1M639 27h1M0 28h1M284 28h1M479 28h1M639 28h1M0 29h1M284 29h1M479 29h1M639 29h1M0 30h1M284 30h1M479 30h1M639 30h1M0 31h1M284 31h1M479 31h1M639 31h1M0 32h1M284 32h1M479 32h1M639 32h1M0 33h1M283 33h1M479 33h1M639 33h1M0 34h1M283 34h1M479 34h1M639 34h1M0 35h1M283 35h1M479 35h1M639 35h1M0 36h1M283 36h1M479 36h1M639 36h1M0 37h1M283 37h1M479 37h1M639 37h1M0 38h1M282 38h1M479 38h1M639 38h1M0 39h1M282 39h1M479 39h1M639 39h1M0 40h1M282 40h1M479 40h1M639 40h1M0 41h1M282 41h1M479 41h1M639 41h1M0 42h1M281 42h1M479 42h1M639 42h1M0 43h1M281 43h1M479 43h1M639 43h1M0 44h1M281 44h1M479 44h1M639 44h1M0 45h1M281 45h1M479 45h1M639 45h1M0 46h1M281 46h1M479 46h1M639 46h1M0 47h1M479 47h1M639 47h1M0 48h1M479 48h1M639 48h1M0 49h1M479 49h1M639 49h1M0 50h1M479 50h1M639 50h1M0 51h1M479 51h1M639 51h1M0 52h1M479 52h1M639 52h1M0 53h1M479 53h1M639 53h1M0 54h1M479 54h1M639 54h1M0 55h1M479 55h1M639 55h1M0 56h1M278 56h1M479 56h1M639 56h1M0 57h1M479 57h1M639 57h1M0 58h1M479 58h1M639 58h1M0 59h1M479 59h1M639 59h1M0 60h1M479 60h1M639 60h1M0 61h1M479 61h1M639 61h1M0 62h1M479 62h1M639 62h1M0 63h1M479 63h1M639 63h1M0 64h1M479 64h1M639 64h1M0 65h1M276 65h1M479 65h1M639 65h1M0 66h1M276 66h1M479 66h1M639 66h1M0 67h1M479 67h1M639 67h1M0 68h1M479 68h1M639 68h1M0 69h1M479 69h1M639 69h1M0 70h1M275 70h1M479 70h1M639 70h1M0 71h1M275 71h1M479 71h1M639 71h1M0 72h1M275 72h1M479 72h1M639 72h1M0 73h1M479 73h1M639 73h1M0 74h1M479 74h1M639 74h1M0 75h1M274 75h1M479 75h1M639 75h1M0 76h1M479 76h1M639 76h1M0 77h1M274 77h1M479 77h1M639 77h1M0 78h1M274 78h1M479 78h1M639 78h1M0 79h1M273 79h1M479 79h1M639 79h1M0 80h1M273 80h1M479 80h1M639 80h1M0 81h1M273 81h1M479 81h1M639 81h1M0 82h1M273 82h1M479 82h1M639 82h1M0 83h1M273 83h1M479 83h1M639 83h1M0 84h1M272 84h1M479 84h1M639 84h1M0 85h1M272 85h1M479 85h1M639 85h1M0 86h1M272 86h1M479 86h1M639 86h1M0 87h1M272 87h1M479 87h1M639 87h1M0 88h1M272 88h1M479 88h1M639 88h1M0 89h1M271 89h1M479 89h1M639 89h1M0 90h1M271 90h1M479 90h1M639 90h1M0 91h1M271 91h1M479 91h1M639 91h1M0 92h1M271 92h1M479 92h1M639 92h1M0 93h1M270 93h1M479 93h1M639 93h1M0 94h1M270 94h1M479 94h1M639 94h1M0 95h1M270 95h1M479 95h1M639 95h1M0 96h1M270 96h1M479 96h1M639 96h1M0 97h1M270 97h1M479 97h1M639 97h1M0 98h1M269 98h1M479 98h1M639 98h1M0 99h1M269 99h1M479 99h1M639 99h1M0 100h1M269 100h1M479 100h1M639 100h1M0 101h1M269 101h1M479 101h1M639 101h1M0 102h1M269 102h1M479 102h1M639 102h1M0 103h1M268 103h1M479 103h1M639 103h1M0 104h1M268 104h1M479 104h1M639 104h1M0 105h1M268 105h1M479 105h1M639 105h1M0 106h1M268 106h1M479 106h1M639 106h1M0 107h1M267 107h1M479 107h1M639 107h1M0 108h1M267 108h1M479 108h1M639 108h1M0 109h1M267 109h1M479 109h1M639 109h1M0 110h1M267 110h1M479 110h1M639 110h1M0 111h1M267 111h1M479 111h1M639 111h1M0 112h1M266 112h1M479 112h1M639 112h1M0 113h1M266 113h1M479 113h1M639 113h1M0 114h1M266 114h1M479 114h1M639 114h1M0 115h1M266 115h1M479 115h1M639 115h1M0 116h1M266 116h1M479 116h1M639 116h1M0 117h1M265 117h1M479 117h1M639 117h1M0 118h1M265 118h1M479 118h1M639 118h1M0 119h1M265 119h1M479 119h1M639 119h1M0 120h1M265 120h1M479 120h1M639 120h1M0 121h1M264 121h1M479 121h1M639 121h1M0 122h1M264 122h1M479 122h1M639 122h1M0 123h1M264 123h1M479 123h1M639 123h1M0 124h1M264 124h1M479 124h1M639 124h1M0 125h1M264 125h1M479 125h1M639 125h1M0 126h1M263 126h1M479 126h1M639 126h1M0 127h1M263 127h1M479 127h1M639 127h1M0 128h1M263 128h1M479 128h1M639 128h1M0 129h1M263 129h1M479 129h1M639 129h1M0 130h1M262 130h1M479 130h1M639 130h1M0 131h1M262 131h1M479 131h1M639 131h1M0 132h1M262 132h1M479 132h1M639 132h1M0 133h1M262 133h1M479 133h1M639 133h1M0 134h1M262 134h1M479 134h1M639 134h1M0 135h1M261 135h1M479 135h1M639 135h1M0 136h1M261 136h1M479 136h1M639 136h1M0 137h1M261 137h1M479 137h1M639 137h1M0 138h1M261 138h1M479 138h1M639 138h1M0 139h1M261 139h1M479 139h1M639 139h1M0 140h1M260 140h1M479 140h1M639 140h1M0 141h1M260 141h1M479 141h1M639 141h1M0 142h1M260 142h1M479 142h1M639 142h1M0 143h1M260 143h1M479 143h1M639 143h1M0 144h1M259 144h1M479 144h1M639 144h1M0 145h1M259 145h1M479 145h1M639 145h1M0 146h1M259 146h1M479 146h1M639 146h1M0 147h1M259 147h1M479 147h1M639 147h1M0 148h1M259 148h1M479 148h1M639 148h1M0 149h1M258 149h1M479 149h1M639 149h1M0 150h1M258 150h1M479 150h1M639 150h1M0 151h1M258 151h1M479 151h1M639 151h1M0 152h1M258 152h1M479 152h1M639 152h1M0 153h1M258 153h1M479 153h1M639 153h1M0 154h1M257 154h1M479 154h1M639 154h1M0 155h1M479 155h1M639 155h1M0 156h1M479 156h1M639 156h1M0 157h1M257 157h1M479 157h1M639 157h1M0 158h1M256 158h1M479 158h1M639 158h1M0 159h1M256 159h1M479 159h1M639 159h1M0 160h1M256 160h1M479 160h1M639 160h1M0 161h1M256 161h1M479 161h1M639 161h1M0 162h1M256 162h1M479 162h1M639 162h1M0 163h1M255 163h1M479 163h1M639 163h1M0 164h1M255 164h1M479 164h1M639 164h1M0 165h1M255 165h1M479 165h1M639 165h1M0 166h1M255 166h1M479 166h1M639 166h1M0 167h1M255 167h1M479 167h1M639 167h1M0 168h1M254 168h1M479 168h1M639 168h1M0 169h1M254 169h1M479 169h1M639 169h1M0 170h1M254 170h1M479 170h1M639 170h1M0 171h1M254 171h1M479 171h1M639 171h1M0 172h1M253 172h1M479 172h1M639 172h1M0 173h1M253 173h1M479 173h1M639 173h1M0 174h1M253 174h1M479 174h1M639 174h1M0 175h1M253 175h1M479 175h1M639 175h1M0 176h1M253 176h1M479 176h1M639 176h1M0 177h1M252 177h1M479 177h1M639 177h1M0 178h1M252 178h1M479 178h1M639 178h1M0 179h1M252 179h1M479 179h1M639 179h1M0 180h1M252 180h1M479 180h1M639 180h1M0 181h1M479 181h1M639 181h1M0 182h1M251 182h1M479 182h1M639 182h1M0 183h1M251 183h1M479 183h1M639 183h1M0 184h1M251 184h1M479 184h1M639 184h1M0 185h1M251 185h1M479 185h1M639 185h1M0 186h1M250 186h1M479 186h1M639 186h1M0 187h1M250 187h1M479 187h1M639 187h1M0 188h1M250 188h1M479 188h1M639 188h1M0 189h1M250 189h1M479 189h1M639 189h1M0 190h1M250 190h1M479 190h1M639 190h1M0 191h1M249 191h1M479 191h1M639 191h1M0 192h1M249 192h1M479 192h1M639 192h1M0 193h1M249 193h1M479 193h1M639 193h1M0 194h1M249 194h1M479 194h1M639 194h1M0 195h1M248 195h1M479 195h1M639 195h1M0 196h1M248 196h1M479 196h1M639 196h1M0 197h1M248 197h1M479 197h1M639 197h1M0 198h1M248 198h1M479 198h1M639 198h1M0 199h1M248 199h1M479 199h1M639 199h1M0 200h1M247 200h1M479 200h1M639 200h1M0 201h1M247 201h1M479 201h1M639 201h1M0 202h1M247 202h1M479 202h1M639 202h1M0 203h1M247 203h1M479 203h1M639 203h1M0 204h1M247 204h1M479 204h1M639 204h1M0 205h1M246 205h1M479 205h1M639 205h1M0 206h1M246 206h1M479 206h1M639 206h1M0 207h1M246 207h1M479 207h1M639 207h1M0 208h1M246 208h1M479 208h1M639 208h1M0 209h1M245 209h1M479 209h1M639 209h1M0 210h1M245 210h1M479 210h1M639 210h1M0 211h1M245 211h1M479 211h1M639 211h1M0 212h1M245 212h1M479 212h1M639 212h1M0 213h1M245 213h1M479 213h1M639 213h1M0 214h1M244 214h1M479 214h1M639 214h1M0 215h1M244 215h1M479 215h1M639 215h1M0 216h1M244 216h1M479 216h1M639 216h1M0 217h1M244 217h1M479 217h1M639 217h1M0 218h1M244 218h1M479 218h1M639 218h1M0 219h1M243 219h1M479 219h1M639 219h1M0 220h1M243 220h1M479 220h1M639 220h1M0 221h1M243 221h1M479 221h1M639 221h1M0 222h1M243 222h1M479 222h1M639 222h1M0 223h1M242 223h1M479 223h1M639 223h1M0 224h1M242 224h1M479 224h1M639 224h1M0 225h1M242 225h1M479 225h1M639 225h1M0 226h1M242 226h1M479 226h1M639 226h1M0 227h1M242 227h1M479 227h1M639 227h1M0 228h1M241 228h1M479 228h1M639 228h1M0 229h1M241 229h1M479 229h1M639 229h1M0 230h1M241 230h1M479 230h1M639 230h1M0 231h1M241 231h1M479 231h1M639 231h1M0 232h1M241 232h1M479 232h1M639 232h1M0 233h1M240 233h1M479 233h1M639 233h1M0 234h1M240 234h1M479 234h1M639 234h1M0 235h1M479 235h1M639 235h1M0 236h1M479 236h1M639 236h1M0 237h1M239 237h1M479 237h1M639 237h1M0 238h1M239 238h1M479 238h1M639 238h1M0 239h1M2 239h10M13 239h30M48 239h5M73 239h87M161 239h78M240 239h2M243 239h90M334 239h24M359 239h9M369 239h21M391 239h9M401 239h5M426 239h4M436 239h30M467 239h10M479 239h1M639 239h1M0 240h1M239 240h1M479 240h1M639 240h1M0 241h1M239 241h1M479 241h1M639 241h1M0 242h1M238 242h1M479 242h1M639 242h1M0 243h1M238 243h1M479 243h1M639 243h1M0 244h1M238 244h1M479 244h1M639 244h1M0 245h1M238 245h1M479 245h1M639 245h1M0 246h1M237 246h1M479 246h1M639 246h1M0 247h1M237 247h1M479 247h1M639 247h1M0 248h1M237 248h1M479 248h1M639 248h1M0 249h1M237 249h1M479 249h1M639 249h1M0 250h1M237 250h1M479 250h1M639 250h1M0 251h1M236 251h1M479 251h1M639 251h1M0 252h1M236 252h1M479 252h1M639 252h1M0 253h1M236 253h1M479 253h1M639 253h1M0 254h1M236 254h1M479 254h1M639 254h1M0 255h1M236 255h1M479 255h1M639 255h1M0 256h1M235 256h1M479 256h1M639 256h1M0 257h1M235 257h1M479 257h1M639 257h1M0 258h1M235 258h1M479 258h1M639 258h1M0 259h1M235 259h1M479 259h1M639 259h1M0 260h1M234 260h1M479 260h1M639 260h1M0 261h1M234 261h1M479 261h1M639 261h1M0 262h1M234 262h1M479 262h1M639 262h1M0 263h1M234 263h1M479 263h1M639 263h1M0 264h1M234 264h1M479 264h1M639 264h1M0 265h1M233 265h1M479 265h1M639 265h1M0 266h1M233 266h1M479 266h1M639 266h1M0 267h1M233 267h1M479 267h1M639 267h1M0 268h1M233 268h1M479 268h1M639 268h1M0 269h1M233 269h1M479 269h1M639 269h1M0 270h1M232 270h1M479 270h1M639 270h1M0 271h1M232 271h1M479 271h1M639 271h1M0 272h1M232 272h1M479 272h1M639 272h1M0 273h1M232 273h1M479 273h1M639 273h1M0 274h1M231 274h1M479 274h1M639 274h1M0 275h1M231 275h1M479 275h1M639 275h1M0 276h1M231 276h1M479 276h1M639 276h1M0 277h1M231 277h1M479 277h1M639 277h1M0 278h1M231 278h1M479 278h1M639 278h1M0 279h1M230 279h1M479 279h1M639 279h1M0 280h1M230 280h1M479 280h1M639 280h1M0 281h1M230 281h1M479 281h1M639 281h1M0 282h1M230 282h1M479 282h1M639 282h1M0 283h1M230 283h1M479 283h1M639 283h1M0 284h1M229 284h1M479 284h1M639 284h1M0 285h1M229 285h1M479 285h1M639 285h1M0 286h1M229 286h1M479 286h1M639 286h1M0 287h1M229 287h1M479 287h1M639 287h1M0 288h1M228 288h1M479 288h1M639 288h1M0 289h1M228 289h1M479 289h1M639 289h1M0 290h1M228 290h1M479 290h1M639 290h1M0 291h1M228 291h1M479 291h1M639 291h1M0 292h1M228 292h1M479 292h1M639 292h1M0 293h1M227 293h1M479 293h1M639 293h1M0 294h1M227 294h1M479 294h1M639 294h1M0 295h1M227 295h1M479 295h1M639 295h1M0 296h1M227 296h1M479 296h1M639 296h1M0 297h1M226 297h1M479 297h1M639 297h1M0 298h1M226 298h1M479 298h1M639 298h1M0 299h1M226 299h1M479 299h1M639 299h1M0 300h1M226 300h1M479 300h1M639 300h1M0 301h1M226 301h1M479 301h1M639 301h1M0 302h1M225 302h1M479 302h1M639 302h1M0 303h1M225 303h1M479 303h1M639 303h1M0 304h1M225 304h1M479 304h1M639 304h1M0 305h1M225 305h1M479 305h1M639 305h1M0 306h1M225 306h1M479 306h1M639 306h1M0 307h1M224 307h1M479 307h1M639 307h1M0 308h1M224 308h1M479 308h1M639 308h1M0 309h1M224 309h1M479 309h1M639 309h1M0 310h1M224 310h1M479 310h1M639 310h1M0 311h1M223 311h1M479 311h1M639 311h1M0 312h1M223 312h1M479 312h1M639 312h1M0 313h1M223 313h1M479 313h1M639 313h1M0 314h1M223 314h1M479 314h1M639 314h1M0 315h1M223 315h1M479 315h1M639 315h1M0 316h1M222 316h1M479 316h1M639 316h1M0 317h1M222 317h1M479 317h1M639 317h1M0 318h1M222 318h1M479 318h1M639 318h1M0 319h1M222 319h1M479 319h1M639 319h1M0 320h1M222 320h1M479 320h1M639 320h1M0 321h1M221 321h1M479 321h1M639 321h1M0 322h1M221 322h1M479 322h1M639 322h1M0 323h1M221 323h1M479 323h1M639 323h1M0 324h1M221 324h1M479 324h1M639 324h1M0 325h1M220 325h1M479 325h1M639 325h1M0 326h1M220 326h1M479 326h1M639 326h1M0 327h1M220 327h1M479 327h1M639 327h1M0 328h1M220 328h1M479 328h1M639 328h1M0 329h1M220 329h1M479 329h1M639 329h1M0 330h1M219 330h1M479 330h1M639 330h1M0 331h1M219 331h1M479 331h1M639 331h1M0 332h1M219 332h1M479 332h1M639 332h1M0 333h1M219 333h1M479 333h1M639 333h1M0 334h1M219 334h1M479 334h1M639 334h1M0 335h1M218 335h1M479 335h1M639 335h1M0 336h1M218 336h1M479 336h1M639 336h1M0 337h1M218 337h1M479 337h1M639 337h1M0 338h1M218 338h1M479 338h1M639 338h1M0 339h1M217 339h1M479 339h1M639 339h1M0 340h1M217 340h1M479 340h1M639 340h1M0 341h1M217 341h1M479 341h1M639 341h1M0 342h1M217 342h1M479 342h1M639 342h1M0 343h1M217 343h1M479 343h1M639 343h1M0 344h1M216 344h1M479 344h1M639 344h1M0 345h1M216 345h1M479 345h1M639 345h1M0 346h1M216 346h1M479 346h1M639 346h1M0 347h1M216 347h1M479 347h1M639 347h1M0 348h1M216 348h1M479 348h1M639 348h1M0 349h1M215 349h1M479 349h1M639 349h1M0 350h1M215 350h1M479 350h1M639 350h1M0 351h1M215 351h1M479 351h1M639 351h1M0 352h1M215 352h1M479 352h1M639 352h1M0 353h1M214 353h1M479 353h1M639 353h1M0 354h1M214 354h1M479 354h1M639 354h1M0 355h1M214 355h1M479 355h1M639 355h1M0 356h1M214 356h1M479 356h1M639 356h1M0 357h1M214 357h1M479 357h1M639 357h1M0 358h1M213 358h1M479 358h1M639 358h1M0 359h1M213 359h1M479 359h1M639 359h1M0 360h1M213 360h1M479 360h1M639 360h1M0 361h1M213 361h1M479 361h1M639 361h1M0 362h1M212 362h1M479 362h1M639 362h1M0 363h1M212 363h1M479 363h1M639 363h1M0 364h1M212 364h1M479 364h1M639 364h1M0 365h1M212 365h1M479 365h1M639 365h1M0 366h1M212 366h1M479 366h1M639 366h1M0 367h1M211 367h1M479 367h1M639 367h1M0 368h1M211 368h1M479 368h1M639 368h1M0 369h1M211 369h1M479 369h1M639 369h1M0 370h1M211 370h1M479 370h1M639 370h1M0 371h1M211 371h1M479 371h1M639 371h1M0 372h1M210 372h1M479 372h1M639 372h1M0 373h1M210 373h1M479 373h1M639 373h1M0 374h1M210 374h1M479 374h1M639 374h1M0 375h1M210 375h1M479 375h1M639 375h1M0 376h1M209 376h1M479 376h1M639 376h1M0 377h1M209 377h1M479 377h1M639 377h1M0 378h1M209 378h1M479 378h1M639 378h1M0 379h1M209 379h1M479 379h1M639 379h1M0 380h1M209 380h1M479 380h1M639 380h1M0 381h1M208 381h1M479 381h1M639 381h1M0 382h1M208 382h1M479 382h1M639 382h1M0 383h1M208 383h1M479 383h1M639 383h1M0 384h1M208 384h1M479 384h1M639 384h1M0 385h1M208 385h1M479 385h1M639 385h1M0 386h1M207 386h1M479 386h1M639 386h1M0 387h1M207 387h1M479 387h1M639 387h1M0 388h1M207 388h1M479 388h1M639 388h1M0 389h1M207 389h1M479 389h1M639 389h1M0 390h1M206 390h1M479 390h1M639 390h1M0 391h1M206 391h1M479 391h1M639 391h1M0 392h1M206 392h1M479 392h1M639 392h1M0 393h1M206 393h1M479 393h1M639 393h1M0 394h1M206 394h1M479 394h1M639 394h1M0 395h1M205 395h1M479 395h1M639 395h1M0 396h1M205 396h1M479 396h1M639 396h1M0 397h1M205 397h1M479 397h1M639 397h1M0 398h1M205 398h1M479 398h1M639 398h1M0 399h1M205 399h1M479 399h1M639 399h1M0 400h1M204 400h1M479 400h1M639 400h1M0 401h1M204 401h1M479 401h1M639 401h1M0 402h1M479 402h1M639 402h1M0 403h1M204 403h1M479 403h1M639 403h1M0 404h1M479 404h1M639 404h1M0 405h1M479 405h1M639 405h1M0 406h1M203 406h1M479 406h1M639 406h1M0 407h1M203 407h1M479 407h1M639 407h1M0 408h1M203 408h1M479 408h1M639 408h1M0 409h1M479 409h1M639 409h1M0 410h1M479 410h1M639 410h1M0 411h1M479 411h1M639 411h1M0 412h1M202 412h1M479 412h1M639 412h1M0 413h1M479 413h1M639 413h1M0 414h1M479 414h1M639 414h1M0 415h1M479 415h1M639 415h1M0 416h1M479 416h1M639 416h1M0 417h1M479 417h1M639 417h1M0 418h1M479 418h1M639 418h1M0 419h1M479 419h1M639 419h1M0 420h1M479 420h1M639 420h1M0 421h1M479 421h1M639 421h1M0 422h1M200 422h1M479 422h1M639 422h1M0 423h1M479 423h1M639 423h1M0 424h1M479 424h1M639 424h1M0 425h1M479 425h1M639 425h1M0 426h1M199 426h1M479 426h1M639 426h1M0 427h1M479 427h1M639 427h1M0 428h1M479 428h1M639 428h1M0 429h1M479 429h1M639 429h1M0 430h1M479 430h1M639 430h1M0 431h1M479 431h1M639 431h1M0 432h1M197 432h1M479 432h1M639 432h1M0 433h1M197 433h1M479 433h1M639 433h1M0 434h1M197 434h1M479 434h1M639 434h1M0 435h1M197 435h1M479 435h1M639 435h1M0 436h1M197 436h1M479 436h1M639 436h1M0 437h1M196 437h1M479 437h1M639 437h1M0 438h1M196 438h1M479 438h1M639 438h1M0 439h1M196 439h1M479 439h1M639 439h1M0 440h1M196 440h1M479 440h1M639 440h1M0 441h1M195 441h1M479 441h1M639 441h1M0 442h1M195 442h1M479 442h1M639 442h1M0 443h1M195 443h1M479 443h1M639 443h1M0 444h1M195 444h1M479 444h1M639 444h1M0 445h1M195 445h1M479 445h1M639 445h1M0 446h1M194 446h1M479 446h1M639 446h1M0 447h1M194 447h1M479 447h1M639 447h1M0 448h1M194 448h1M479 448h1M639 448h1M0 449h1M194 449h1M479 449h1M639 449h1M0 450h1M194 450h1M479 450h1M639 450h1M0 451h1M193 451h1M479 451h1M639 451h1M0 452h1M193 452h1M479 452h1M639 452h1M0 453h1M193 453h1M479 453h1M639 453h1M0 454h1M193 454h1M479 454h1M639 454h1M0 455h1M192 455h1M479 455h1M639 455h1M0 456h1M192 456h1M479 456h1M639 456h1M0 457h1M192 457h1M479 457h1M639 457h1M0 458h1M192 458h1M479 458h1M639 458h1M0 459h1M192 459h1M479 459h1M639 459h1M0 460h1M191 460h1M479 460h1M639 460h1M0 461h1M479 461h1M639 461h1M0 462h1M191 462h1M479 462h1M639 462h1M0 463h1M191 463h1M479 463h1M639 463h1M0 464h1M191 464h1M479 464h1M639 464h1M0 465h1M190 465h1M479 465h1M639 465h1M0 466h1M190 466h1M479 466h1M639 466h1M0 467h1M190 467h1M479 467h1M639 467h1M0 468h1M190 468h1M479 468h1M639 468h1M0 469h1M189 469h1M479 469h1M639 469h1M0 470h1M189 470h1M479 470h1M639 470h1M0 471h1M189 471h1M479 471h1M639 471h1M0 472h1M479 472h1M639 472h1M0 473h1M479 473h1M639 473h1M0 474h1M479 474h1M639 474h1M0 475h1M479 475h1M639 475h1M0 476h1M479 476h1M639 476h1M0 477h1M479 477h1M639 477h1M0 478h1M479 478h1M639 478h1M0 479h640"/>
<path stroke="rgb(127,127,127)" d="M227 44h1M230 44h1M237 44h1M239 44h1M243 44h1M246 44h1M253 44h1M220 45h1M223 45h1M227 45h1M230 45h1M237 45h1M239 45h1M243 45h1M246 45h1M253 45h1M256 45h1M260 45h1M210 46h1M213 46h1M220 46h1M223 46h1M227 46h1M230 46h1M237 46h1M239 46h1M243 46h1M246 46h1M253 46h1M256 46h1M260 46h1M263 46h1M203 47h1M206 47h1M210 47h1M213 47h1M220 47h1M223 47h1M227 47h1M230 47h1M237 47h1M239 47h1M243 47h1M246 47h1M253 47h1M256 47h1M260 47h1M263 47h1M270 47h1M273 47h1M203 48h1M206 48h1M210 48h1M213 48h1M220 48h1M223 48h1M227 48h1M230 48h1M236 48h1M240 48h1M243 48h1M246 48h1M253 48h1M256 48h1M260 48h1M263 48h1M270 48h1M273 48h1M277 48h1M280 48h1M196 49h1M203 49h1M206 49h1M210 49h1M213 49h1M220 49h1M223 49h1M227 49h1M230 49h1M236 49h1M240 49h1M243 49h1M246 49h1M253 49h1M256 49h1M259 49h1M263 49h1M270 49h1M273 49h1M277 49h1M280 49h1M193 50h1M196 50h1M203 50h1M206 50h1M210 50h1M214 50h1M220 50h1M223 50h1M227 50h1M230 50h1M236 50h1M240 50h1M243 50h1M246 50h1M253 50h1M256 50h1M259 50h1M262 50h1M269 50h1M273 50h1M276 50h1M280 50h1M287 50h1M190 51h1M193 51h1M197 51h1M204 51h1M207 51h1M210 51h1M214 51h1M220 51h1M223 51h1M227 51h1M230 51h1M236 51h1M240 51h1M243 51h1M246 51h1M253 51h1M256 51h1M259 51h1M262 51h1M269 51h1M272 51h1M276 51h1M280 51h1M287 51h1M290 51h1M186 52h1M190 52h1M193 52h1M197 52h1M204 52h1M207 52h1M210 52h1M214 52h1M220 52h1M223 52h1M227 52h1M230 52h1M236 52h1M240 52h1M243 52h1M246 52h1M253 52h1M256 52h1M259 52h1M262 52h1M269 52h1M272 52h1M276 52h1M279 52h1M286 52h1M290 52h1M293 52h1M187 53h1M190 53h1M193 53h1M197 53h1M204 53h1M207 53h1M210 53h1M214 53h1M220 53h1M256 53h1M259 53h1M262 53h1M269 53h1M272 53h1M276 53h1M279 53h1M286 53h1M289 53h1M293 53h1M296 53h1M180 54h1M187 54h1M191 54h1M194 54h1M197 54h1M204 54h1M207 54h1M210 54h1M214 54h1M262 54h1M269 54h1M272 54h1M275 54h1M279 54h1M286 54h1M289 54h1M292 54h1M296 54h1M177 55h1M181 55h1M187 55h1M191 55h1M194 55h1M198 55h1M204 55h1M207 55h1M272 55h1M275 55h1M279 55h1M286 55h1M289 55h1M292 55h1M295 55h1M303 55h1M173 56h1M178 56h1M181 56h1M187 56h1M191 56h1M194 56h1M198 56h1M275 56h1M279 56h1M285 56h1M289 56h1M292 56h1M295 56h1M303 56h1M306 56h1M170 57h1M174 57h1M178 57h1M181 57h1M188 57h1M191 57h1M194 57h1M198 57h1M285 57h1M288 57h1M292 57h1M295 57h1M302 57h1M306 57h1M309 57h1M170 58h1M174 58h1M178 58h1M181 58h1M188 58h1M191 58h1M285 58h1M288 58h1M291 58h1M295 58h1M302 58h1M305 58h1M309 58h1M312 58h1M164 59h1M171 59h1M175 59h1M178 59h1M182 59h1M188 59h1M288 59h1M291 59h1M294 59h1M302 59h1M305 59h1M308 59h1M312 59h1M164 60h1M171 60h1M175 60h1M179 60h1M182 60h1M294 60h1M302 60h1M305 60h1M308 60h1M311 60h1M161 61h1M165 61h1M172 61h1M175 61h1M179 61h1M182 61h1M301 61h1M305 61h1M308 61h1M311 61h1M319 61h1M158 62h1M161 62h1M165 62h1M172 62h1M176 62h1M179 62h1M301 62h1M304 62h1M308 62h1M311 62h1M319 62h1M158 63h1M162 63h1M166 63h1M173 63h1M176 63h1M304 63h1M307 63h1M311 63h1M318 63h1M322 63h1M155 64h1M159 64h1M162 64h1M166 64h1M173 64h1M304 64h1M307 64h1M310 64h1M318 64h1M322 64h1M325 64h1M155 65h1M159 65h1M163 65h1M166 65h1M307 65h1M310 65h1M317 65h1M321 65h1M325 65h1M148 66h1M156 66h1M160 66h1M163 66h1M167 66h1M310 66h1M317 66h1M321 66h1M324 66h1M328 66h1M149 67h1M156 67h1M160 67h1M164 67h1M167 67h1M316 67h1M320 67h1M324 67h1M328 67h1M145 68h1M149 68h1M157 68h1M161 68h1M164 68h1M316 68h1M320 68h1M323 68h1M327 68h1M146 69h1M150 69h1M157 69h1M161 69h1M319 69h1M323 69h1M327 69h1M334 69h1M142 70h1M146 70h1M150 70h1M158 70h1M319 70h1M322 70h1M326 70h1M333 70h1M139 71h1M143 71h1M147 71h1M151 71h1M158 71h1M322 71h1M326 71h1M333 71h1M337 71h1M140 72h1M143 72h1M147 72h1M151 72h1M325 72h1M332 72h1M336 72h1M340 72h1M140 73h1M144 73h1M148 73h1M152 73h1M325 73h1M332 73h1M336 73h1M339 73h1M141 74h1M144 74h1M148 74h1M152 74h1M331 74h1M335 74h1M339 74h1M343 74h1M134 75h1M141 75h1M145 75h1M149 75h1M331 75h1M334 75h1M338 75h1M342 75h1M135 76h1M142 76h1M145 76h1M330 76h1M334 76h1M338 76h1M342 76h1M131 77h1M135 77h1M142 77h1M146 77h1M333 77h1M337 77h1M341 77h1M132 78h1M136 78h1M143 78h1M337 78h1M341 78h1M348 78h1M128 79h1M132 79h1M136 79h1M336 79h1M340 79h1M347 79h1M129 80h1M133 80h1M137 80h1M340 80h1M347 80h1M351 80h1M125 81h1M129 81h1M133 81h1M137 81h1M339 81h1M346 81h1M350 81h1M126 82h1M130 82h1M134 82h1M138 82h1M345 82h1M350 82h1M354 82h1M127 83h1M131 83h1M134 83h1M345 83h1M349 83h1M353 83h1M128 84h1M131 84h1M135 84h1M344 84h1M348 84h1M352 84h1M357 84h1M120 85h1M128 85h1M132 85h1M348 85h1M351 85h1M356 85h1M121 86h1M129 86h1M347 86h1M351 86h1M355 86h1M117 87h1M121 87h1M130 87h1M172 87h1M350 87h1M354 87h1M118 88h1M122 88h1M349 88h1M354 88h1M362 88h1M114 89h1M119 89h1M123 89h1M173 89h1M353 89h1M361 89h1M115 90h1M120 90h1M123 90h1M352 90h1M360 90h1M365 90h1M112 91h1M116 91h1M120 91h1M124 91h1M174 91h1M359 91h1M364 91h1M113 92h1M117 92h1M121 92h1M359 92h1M363 92h1M367 92h1M114 93h1M117 93h1M122 93h1M175 93h1M358 93h1M362 93h1M366 93h1M115 94h1M118 94h1M357 94h1M362 94h1M365 94h1M115 95h1M119 95h1M361 95h1M364 95h1M370 95h1M107 96h1M116 96h1M360 96h1M364 96h1M369 96h1M108 97h1M117 97h1M363 97h1M368 97h1M104 98h1M109 98h1M362 98h1M367 98h1M105 99h1M110 99h1M177 99h1M367 99h1M375 99h1M106 100h1M110 100h1M366 100h1M374 100h1M102 101h1M107 101h1M111 101h1M178 101h1M365 101h1M373 101h1M103 102h1M108 102h1M112 102h1M372 102h1M377 102h1M99 103h1M104 103h1M109 103h1M179 103h1M371 103h1M376 103h1M100 104h1M105 104h1M110 104h1M370 104h1M375 104h1M380 104h1M101 105h1M106 105h1M180 105h1M369 105h1M374 105h1M379 105h1M102 106h1M107 106h1M180 106h1M373 106h1M378 106h1M103 107h1M180 107h2M372 107h1M377 107h1M382 107h1M95 108h1M104 108h1M180 108h1M376 108h1M381 108h1M96 109h1M105 109h1M180 109h1M182 109h1M375 109h1M379 109h2M97 110h1M179 110h1M374 110h1M378 110h1M92 111h1M98 111h2M179 111h1M183 111h1M377 111h1M93 112h1M100 112h1M179 112h1M376 112h1M387 112h1M90 113h1M94 113h1M101 113h1M179 113h1M183 113h1M386 113h1M91 114h1M95 114h2M179 114h1M384 114h2M389 114h1M92 115h1M97 115h1M184 115h1M383 115h1M388 115h1M88 116h1M93 116h2M98 116h1M382 116h1M386 116h2M89 117h1M95 117h1M185 117h1M318 117h1M381 117h1M385 117h1M391 117h1M90 118h1M96 118h1M318 118h1M384 118h1M390 118h1M91 119h2M186 119h1M317 119h1M354 119h1M383 119h1M388 119h2M93 120h1M317 120h1M387 120h1M393 120h1M84 121h1M94 121h1M187 121h1M317 121h1M352 121h1M386 121h1M391 121h2M85 122h1M317 122h1M385 122h1M390 122h1M86 123h1M316 123h1M350 123h1M388 123h2M82 124h1M87 124h2M184 124h1M316 124h1M387 124h1M83 125h1M89 125h1M348 125h1M397 125h1M84 126h1M90 126h1M185 126h1M396 126h1M80 127h1M85 127h2M190 127h1M346 127h1M394 127h2M81 128h2M87 128h1M186 128h1M393 128h1M399 128h1M83 129h1M88 129h1M191 129h1M344 129h1M392 129h1M397 129h2M78 130h1M84 130h2M391 130h1M396 130h1M79 131h2M86 131h1M342 131h1M394 131h2M401 131h1M81 132h1M188 132h1M393 132h1M399 132h2M82 133h2M192 133h1M341 133h1M397 133h2M84 134h1M188 134h1M309 134h1M395 134h2M403 134h1M74 135h1M339 135h1M394 135h1M401 135h2M75 136h2M189 136h1M308 136h1M399 136h2M77 137h2M194 137h1M337 137h1M397 137h2M72 138h1M79 138h2M190 138h1M396 138h1M73 139h2M81 139h1M195 139h1M335 139h1M407 139h1M75 140h2M191 140h1M305 140h1M405 140h2M71 141h1M77 141h2M196 141h1M333 141h1M403 141h2M72 142h2M79 142h1M304 142h1M401 142h2M408 142h1M74 143h1M197 143h1M331 143h1M400 143h1M406 143h2M69 144h1M75 144h2M303 144h1M404 144h2M70 145h2M77 145h1M198 145h1M329 145h1M402 145h2M410 145h1M72 146h2M302 146h1M401 146h1M408 146h2M74 147h2M198 147h1M327 147h1M406 147h2M76 148h1M300 148h1M404 148h2M411 148h2M199 149h1M325 149h1M403 149h1M409 149h2M66 150h2M407 150h2M68 151h2M323 151h1M405 151h2M70 152h2M404 152h1M64 153h2M72 153h2M201 153h1M321 153h1M66 154h2M414 154h1M68 155h2M97 155h1M202 155h1M319 155h1M412 155h2M63 156h2M70 156h2M99 156h1M410 156h2M65 157h2M101 157h1M203 157h1M318 157h1M408 157h2M67 158h2M103 158h1M407 158h1M415 158h2M61 159h2M69 159h2M105 159h1M204 159h1M316 159h1M413 159h2M63 160h2M411 160h2M65 161h2M107 161h1M205 161h1M314 161h1M409 161h2M416 161h2M67 162h2M109 162h1M414 162h2M111 163h1M206 163h1M312 163h1M412 163h2M113 164h1M410 164h2M418 164h2M115 165h1M206 165h1M310 165h1M415 165h3M58 166h2M117 166h1M413 166h2M60 167h4M207 167h1M308 167h1M411 167h2M64 168h3M119 168h1M57 169h2M121 169h1M208 169h1M306 169h1M59 170h4M123 170h1M420 170h2M63 171h3M125 171h1M209 171h1M304 171h1M418 171h2M56 172h2M127 172h1M416 172h2M58 173h4M210 173h1M302 173h1M414 173h2M422 173h1M62 174h3M129 174h1M419 174h3M55 175h2M131 175h1M211 175h1M300 175h1M417 175h2M57 176h4M133 176h1M415 176h2M61 177h2M135 177h1M212 177h1M298 177h1M422 177h2M137 178h1M418 178h4M213 179h1M296 179h1M416 179h2M139 180h1M393 180h1M423 180h2M141 181h1M213 181h1M295 181h1M391 181h1M419 181h4M53 182h2M143 182h1M389 182h1M417 182h2M55 183h4M145 183h1M214 183h1M293 183h1M385 183h1M387 183h1M59 184h2M147 184h1M383 184h1M52 185h2M215 185h1M291 185h1M381 185h1M54 186h4M149 186h1M377 186h1M379 186h1M425 186h2M58 187h2M151 187h1M216 187h1M289 187h1M375 187h1M421 187h4M51 188h2M153 188h1M373 188h1M419 188h2M53 189h4M155 189h1M217 189h1M287 189h1M371 189h1M57 190h3M157 190h1M367 190h1M369 190h1M424 190h4M50 191h2M159 191h1M218 191h1M285 191h1M365 191h1M420 191h4M52 192h4M363 192h1M56 193h3M161 193h1M219 193h1M283 193h1M359 193h1M361 193h1M425 193h4M163 194h1M357 194h1M421 194h4M165 195h1M220 195h1M281 195h1M355 195h1M167 196h1M351 196h1M353 196h1M427 196h3M169 197h1M220 197h1M279 197h1M349 197h1M423 197h4M48 198h4M347 198h1M421 198h2M52 199h5M171 199h1M221 199h1M277 199h1M343 199h1M345 199h1M173 200h1M341 200h1M48 201h2M175 201h1M222 201h1M275 201h1M339 201h1M50 202h4M177 202h1M335 202h1M337 202h1M54 203h3M179 203h1M223 203h1M273 203h1M333 203h1M427 203h5M331 204h1M423 204h4M47 205h4M181 205h1M224 205h1M272 205h1M329 205h1M51 206h5M183 206h1M325 206h1M327 206h1M427 206h5M225 207h1M270 207h1M323 207h1M423 207h4M47 208h3M187 208h1M321 208h1M50 209h5M189 209h1M226 209h1M268 209h1M317 209h1M319 209h1M191 210h1M315 210h1M424 210h9M227 211h1M266 211h1M313 211h1M193 212h1M309 212h1M311 212h1M195 213h1M228 213h1M264 213h1M307 213h1M428 213h5M197 214h1M305 214h1M424 214h4M46 215h4M199 215h1M262 215h1M301 215h1M303 215h1M50 216h5M95 216h4M201 216h1M299 216h1M99 217h4M229 217h1M260 217h1M297 217h1M45 218h4M203 218h1M293 218h1M295 218h1M49 219h5M205 219h1M230 219h1M258 219h1M291 219h1M115 220h1M117 220h1M207 220h1M289 220h1M425 220h9M119 221h1M121 221h1M123 221h1M125 221h1M209 221h1M231 221h1M256 221h1M285 221h1M287 221h1M45 222h9M129 222h1M211 222h1M283 222h1M232 223h1M254 223h1M281 223h1M426 223h8M213 224h1M279 224h1M44 225h9M215 225h1M233 225h1M252 225h1M275 225h1M277 225h1M217 226h1M273 226h1M219 227h1M234 227h1M250 227h1M271 227h1M426 227h9M221 228h1M267 228h1M269 228h1M223 229h1M235 229h1M249 229h1M265 229h1M263 230h1M426 230h9M225 231h1M235 231h1M247 231h1M259 231h1M261 231h1M44 232h9M227 232h1M257 232h1M229 233h1M236 233h1M245 233h1M255 233h1M231 234h1M251 234h1M253 234h1M44 235h9M233 235h1M237 235h1M243 235h1M249 235h1M247 236h1M426 236h4M235 237h1M238 237h1M241 237h1M243 237h1M245 237h1M430 237h5M48 238h5M237 238h1M241 238h1M44 239h4M239 239h1M430 239h5M237 240h1M241 240h1M426 240h4M44 241h4M233 241h1M235 241h1M237 241h1M240 241h1M243 241h1M48 242h5M231 242h1M229 243h1M235 243h1M241 243h1M245 243h1M426 243h9M225 244h1M227 244h1M247 244h1M223 245h1M233 245h1M242 245h1M249 245h1M221 246h1M251 246h1M426 246h9M217 247h1M219 247h1M231 247h1M243 247h1M253 247h1M44 248h9M215 248h1M213 249h1M229 249h1M243 249h1M255 249h1M209 250h1M211 250h1M257 250h1M44 251h9M207 251h1M227 251h1M244 251h1M259 251h1M205 252h1M261 252h1M201 253h1M203 253h1M226 253h1M245 253h1M263 253h1M426 253h9M199 254h1M265 254h1M45 255h9M197 255h1M224 255h1M246 255h1M195 256h1M267 256h1M425 256h9M191 257h1M193 257h1M222 257h1M247 257h1M269 257h1M45 258h9M189 258h1M271 258h1M187 259h1M220 259h1M248 259h1M273 259h1M425 259h4M183 260h1M185 260h1M275 260h1M429 260h5M181 261h1M218 261h1M249 261h1M179 262h1M277 262h1M424 262h5M175 263h1M177 263h1M216 263h1M250 263h1M279 263h1M429 263h4M50 264h5M173 264h1M281 264h1M46 265h4M171 265h1M214 265h1M250 265h1M283 265h1M167 266h1M169 266h1M285 266h1M165 267h1M212 267h1M251 267h1M46 268h9M163 268h1M287 268h1M159 269h1M161 269h1M210 269h1M252 269h1M289 269h1M424 269h4M157 270h1M291 270h1M428 270h4M51 271h5M155 271h1M208 271h1M253 271h1M293 271h1M47 272h4M151 272h1M153 272h1M295 272h1M423 272h4M149 273h1M206 273h1M254 273h1M297 273h1M427 273h5M51 274h5M147 274h1M47 275h4M145 275h1M204 275h1M255 275h1M299 275h1M422 275h2M141 276h1M143 276h1M301 276h1M424 276h4M139 277h1M203 277h1M256 277h1M303 277h1M428 277h3M137 278h1M305 278h1M133 279h1M135 279h1M201 279h1M257 279h1M307 279h1M422 279h4M55 280h3M131 280h1M426 280h5M51 281h4M129 281h1M199 281h1M258 281h1M309 281h1M49 282h2M125 282h1M127 282h1M311 282h1M123 283h1M197 283h1M258 283h1M313 283h1M54 284h4M121 284h1M315 284h1M50 285h4M117 285h1M119 285h1M195 285h1M259 285h1M317 285h1M420 285h2M115 286h1M422 286h4M54 287h5M113 287h1M193 287h1M260 287h1M319 287h1M426 287h3M51 288h3M109 288h1M111 288h1M321 288h1M419 288h2M107 289h1M191 289h1M261 289h1M323 289h1M421 289h4M57 290h3M105 290h1M325 290h1M425 290h3M53 291h4M103 291h1M189 291h1M262 291h1M327 291h1M419 291h2M52 292h1M99 292h1M101 292h1M329 292h1M421 292h4M97 293h1M187 293h1M263 293h1M425 293h2M95 294h1M331 294h1M418 294h2M91 295h1M93 295h1M185 295h1M264 295h1M333 295h1M420 295h4M59 296h3M89 296h1M335 296h1M424 296h2M55 297h4M87 297h1M183 297h1M265 297h1M337 297h1M54 298h1M85 298h1M339 298h1M60 299h3M181 299h1M265 299h1M56 300h4M341 300h1M55 301h1M180 301h1M266 301h1M343 301h1M416 301h2M62 302h2M345 302h1M418 302h4M59 303h3M178 303h1M267 303h1M347 303h1M422 303h2M57 304h2M349 304h1M414 304h2M56 305h1M63 305h2M176 305h1M268 305h1M416 305h4M61 306h2M351 306h1M420 306h3M59 307h2M174 307h1M269 307h1M353 307h1M413 307h2M57 308h2M355 308h1M415 308h4M172 309h1M270 309h1M357 309h1M419 309h3M359 310h1M412 310h2M66 311h2M170 311h1M271 311h1M414 311h4M63 312h3M361 312h1M418 312h3M61 313h2M168 313h1M272 313h1M363 313h1M59 314h2M67 314h2M365 314h1M65 315h2M166 315h1M273 315h1M367 315h1M63 316h2M369 316h1M410 316h2M61 317h2M68 317h2M164 317h1M273 317h1M371 317h1M412 317h2M66 318h2M414 318h2M64 319h2M162 319h1M274 319h1M373 319h1M408 319h2M416 319h2M62 320h2M70 320h2M375 320h1M410 320h2M68 321h2M160 321h1M275 321h1M377 321h1M412 321h2M66 322h2M379 322h1M407 322h2M414 322h2M64 323h2M158 323h1M276 323h1M381 323h1M409 323h2M411 324h2M157 325h1M277 325h1M405 325h2M413 325h2M73 326h2M407 326h2M71 327h2M155 327h1M278 327h1M409 327h2M69 328h2M411 328h2M67 329h2M75 329h1M153 329h1M279 329h1M73 330h2M402 330h1M71 331h2M151 331h1M280 331h1M403 331h2M69 332h2M77 332h1M405 332h2M68 333h1M75 333h2M149 333h1M280 333h1M401 333h1M407 333h2M73 334h2M402 334h2M409 334h1M71 335h2M78 335h1M147 335h1M281 335h1M404 335h1M70 336h1M76 336h2M399 336h1M405 336h2M74 337h2M145 337h1M282 337h1M400 337h2M407 337h1M72 338h2M402 338h2M71 339h1M143 339h1M283 339h1M397 339h1M404 339h2M82 340h1M398 340h2M406 340h1M80 341h2M141 341h1M284 341h1M400 341h2M78 342h2M402 342h2M76 343h2M84 343h1M139 343h1M285 343h1M404 343h1M75 344h1M82 344h2M394 344h1M80 345h2M137 345h1M286 345h1M395 345h2M78 346h2M85 346h1M397 346h1M77 347h1M83 347h2M135 347h1M287 347h1M392 347h1M398 347h2M82 348h1M87 348h1M393 348h2M400 348h1M80 349h2M86 349h1M134 349h1M287 349h1M390 349h1M395 349h1M79 350h1M84 350h2M391 350h1M396 350h2M83 351h1M132 351h1M288 351h1M392 351h1M398 351h1M82 352h1M388 352h1M393 352h2M81 353h1M130 353h1M289 353h1M389 353h1M395 353h1M91 354h1M390 354h1M396 354h1M89 355h2M128 355h1M290 355h1M391 355h2M88 356h1M93 356h1M393 356h1M86 357h2M92 357h1M126 357h1M291 357h1M384 357h1M394 357h1M85 358h1M90 358h2M385 358h1M89 359h1M95 359h1M124 359h1M292 359h1M386 359h1M88 360h1M94 360h1M382 360h1M387 360h2M87 361h1M92 361h2M97 361h1M293 361h1M383 361h1M389 361h1M91 362h1M96 362h1M380 362h1M384 362h1M390 362h1M90 363h1M94 363h2M294 363h1M381 363h1M385 363h2M89 364h1M93 364h1M382 364h1M387 364h1M92 365h1M295 365h1M377 365h1M383 365h2M388 365h1M91 366h1M102 366h1M378 366h1M385 366h1M101 367h1M295 367h1M379 367h1M386 367h1M99 368h2M104 368h1M380 368h2M98 369h1M103 369h1M296 369h1M373 369h1M382 369h1M97 370h1M102 370h1M374 370h1M383 370h1M96 371h1M101 371h1M106 371h1M297 371h1M375 371h1M100 372h1M105 372h1M371 372h1M376 372h1M99 373h1M104 373h1M109 373h1M298 373h1M372 373h1M377 373h1M98 374h1M103 374h1M108 374h1M368 374h1M373 374h1M378 374h1M102 375h1M107 375h1M299 375h1M369 375h1M374 375h1M379 375h1M101 376h1M106 376h1M366 376h1M370 376h1M375 376h1M105 377h1M113 377h1M300 377h1M367 377h1M371 377h1M376 377h1M104 378h1M112 378h1M368 378h1M372 378h1M103 379h1M111 379h1M301 379h1M369 379h1M373 379h1M110 380h1M116 380h1M369 380h1M374 380h1M110 381h1M115 381h1M302 381h1M361 381h1M370 381h1M109 382h1M114 382h1M118 382h1M362 382h1M371 382h1M108 383h1M113 383h1M117 383h1M302 383h1M359 383h1M363 383h1M113 384h1M116 384h1M121 384h1M360 384h1M364 384h1M112 385h1M115 385h1M120 385h1M303 385h1M356 385h1M361 385h1M364 385h1M111 386h1M115 386h1M119 386h1M357 386h1M362 386h1M365 386h1M114 387h1M118 387h1M304 387h1M354 387h1M358 387h1M362 387h1M366 387h1M113 388h1M118 388h1M126 388h1M355 388h1M359 388h1M363 388h1M117 389h1M125 389h1M305 389h1M355 389h1M359 389h1M364 389h1M116 390h1M124 390h1M129 390h1M356 390h1M360 390h1M123 391h1M128 391h1M306 391h1M348 391h1M357 391h1M361 391h1M123 392h1M127 392h1M131 392h1M349 392h1M357 392h1M122 393h1M126 393h1M130 393h1M346 393h1M350 393h1M358 393h1M121 394h1M126 394h1M130 394h1M134 394h1M343 394h1M347 394h1M351 394h1M125 395h1M129 395h1M133 395h1M344 395h1M347 395h1M351 395h1M124 396h1M128 396h1M133 396h1M340 396h1M344 396h1M348 396h1M352 396h1M128 397h1M132 397h1M139 397h1M341 397h1M345 397h1M349 397h1M353 397h1M127 398h1M131 398h1M138 398h1M341 398h1M345 398h1M349 398h1M131 399h1M138 399h1M142 399h1M342 399h1M346 399h1M350 399h1M130 400h1M137 400h1M141 400h1M335 400h1M342 400h1M346 400h1M137 401h1M141 401h1M145 401h1M332 401h1M336 401h1M343 401h1M347 401h1M136 402h1M140 402h1M144 402h1M148 402h1M333 402h1M336 402h1M343 402h1M136 403h1M140 403h1M144 403h1M147 403h1M329 403h1M333 403h1M337 403h1M344 403h1M135 404h1M139 404h1M143 404h1M147 404h1M326 404h1M330 404h1M334 404h1M337 404h1M139 405h1M142 405h1M146 405h1M153 405h1M327 405h1M330 405h1M334 405h1M338 405h1M138 406h1M142 406h1M146 406h1M153 406h1M327 406h1M331 406h1M335 406h1M338 406h1M141 407h1M145 407h1M152 407h1M156 407h1M320 407h1M328 407h1M331 407h1M335 407h1M339 407h1M145 408h1M152 408h1M156 408h1M159 408h1M321 408h1M328 408h1M332 408h1M336 408h1M144 409h1M151 409h1M155 409h1M159 409h1M317 409h1M321 409h1M329 409h1M332 409h1M151 410h1M155 410h1M158 410h1M162 410h1M314 410h1M317 410h1M322 410h1M329 410h1M333 410h1M150 411h1M154 411h1M158 411h1M162 411h1M311 411h1M314 411h1M318 411h1M322 411h1M330 411h1M150 412h1M154 412h1M157 412h1M161 412h1M168 412h1M311 412h1M315 412h1M318 412h1M323 412h1M153 413h1M157 413h1M161 413h1M168 413h1M171 413h1M312 413h1M315 413h1M319 413h1M323 413h1M153 414h1M156 414h1M160 414h1M167 414h1M171 414h1M174 414h1M305 414h1M312 414h1M316 414h1M319 414h1M324 414h1M156 415h1M160 415h1M167 415h1M170 415h1M174 415h1M302 415h1M305 415h1M313 415h1M316 415h1M320 415h1M159 416h1M167 416h1M170 416h1M173 416h1M177 416h1M299 416h1M302 416h1M306 416h1M313 416h1M317 416h1M320 416h1M159 417h1M167 417h1M170 417h1M173 417h1M177 417h1M296 417h1M299 417h1M303 417h1M306 417h1M313 417h1M317 417h1M166 418h1M170 418h1M173 418h1M176 418h1M184 418h1M296 418h1M300 418h1M303 418h1M307 418h1M314 418h1M166 419h1M169 419h1M173 419h1M176 419h1M184 419h1M187 419h1M190 419h1M290 419h1M297 419h1M300 419h1M304 419h1M307 419h1M314 419h1M166 420h1M169 420h1M172 420h1M176 420h1M183 420h1M187 420h1M190 420h1M193 420h1M287 420h1M290 420h1M297 420h1M300 420h1M304 420h1M308 420h1M169 421h1M172 421h1M176 421h1M183 421h1M186 421h1M189 421h1M193 421h1M280 421h1M284 421h1M287 421h1M291 421h1M297 421h1M300 421h1M304 421h1M308 421h1M172 422h1M175 422h1M183 422h1M186 422h1M189 422h1M192 422h1M199 422h1M203 422h1M280 422h1M284 422h1M287 422h1M291 422h1M297 422h1M301 422h1M305 422h1M175 423h1M183 423h1M186 423h1M189 423h1M192 423h1M199 423h1M203 423h1M206 423h1M271 423h1M274 423h1M281 423h1M284 423h1M287 423h1M291 423h1M298 423h1M301 423h1M182 424h1M186 424h1M189 424h1M192 424h1M199 424h1M202 424h1M206 424h1M209 424h1M216 424h1M264 424h1M268 424h1M271 424h1M274 424h1M281 424h1M284 424h1M288 424h1M291 424h1M298 424h1M182 425h1M185 425h1M188 425h1M192 425h1M199 425h1M202 425h1M206 425h1M209 425h1M216 425h1M219 425h1M222 425h1M255 425h1M258 425h1M264 425h1M268 425h1M271 425h1M274 425h1M281 425h1M285 425h1M288 425h1M292 425h1M185 426h1M188 426h1M191 426h1M198 426h1M202 426h1M206 426h1M209 426h1M216 426h1M219 426h1M222 426h1M225 426h1M232 426h1M235 426h1M238 426h1M242 426h1M248 426h1M251 426h1M255 426h1M258 426h1M264 426h1M268 426h1M271 426h1M274 426h1M281 426h1M285 426h1M288 426h1M292 426h1M188 427h1M191 427h1M198 427h1M202 427h1M205 427h1M209 427h1M216 427h1M219 427h1M222 427h1M225 427h1M232 427h1M235 427h1M238 427h1M242 427h1M248 427h1M251 427h1M255 427h1M258 427h1M264 427h1M268 427h1M272 427h1M275 427h1M282 427h1M285 427h1M288 427h1M191 428h1M198 428h1M201 428h1M205 428h1M208 428h1M216 428h1M219 428h1M222 428h1M225 428h1M232 428h1M235 428h1M238 428h1M242 428h1M248 428h1M251 428h1M255 428h1M258 428h1M265 428h1M268 428h1M272 428h1M275 428h1M282 428h1M285 428h1M198 429h1M201 429h1M205 429h1M208 429h1M215 429h1M218 429h1M222 429h1M225 429h1M232 429h1M235 429h1M238 429h1M242 429h1M248 429h1M251 429h1M255 429h1M258 429h1M265 429h1M268 429h1M272 429h1M275 429h1M282 429h1M198 430h1M201 430h1M205 430h1M208 430h1M215 430h1M218 430h1M222 430h1M225 430h1M232 430h1M235 430h1M239 430h1M241 430h1M248 430h1M251 430h1M255 430h1M258 430h1M265 430h1M268 430h1M272 430h1M275 430h1M205 431h1M208 431h1M215 431h1M218 431h1M222 431h1M225 431h1M232 431h1M235 431h1M239 431h1M241 431h1M248 431h1M251 431h1M255 431h1M258 431h1M265 431h1M268 431h1M272 431h1M275 431h1M215 432h1M218 432h1M222 432h1M225 432h1M232 432h1M235 432h1M239 432h1M241 432h1M248 432h1M251 432h1M255 432h1M258 432h1M265 432h1M268 432h1M218 433h1M222 433h1M225 433h1M232 433h1M235 433h1M239 433h1M241 433h1M248 433h1M251 433h1M255 433h1M258 433h1M225 434h1M232 434h1M235 434h1M239 434h1M241 434h1M248 434h1M251 434h1"/>
<path stroke="rgb(255,0,0)" d="M299 29h3M309 29h3M298 30h1M302 30h1M308 30h1M312 30h1M297 31h1M303 31h1M307 31h1M313 31h1M297 32h1M303 32h1M307 32h1M313 32h1M297 33h1M303 33h1M307 33h1M313 33h1M298 34h1M303 34h1M307 34h1M312 34h1M299 35h1M303 35h1M307 35h1M311 35h1M304 36h1M306 36h1M305 37h1M305 38h1M305 39h1M305 40h1M305 41h1M305 42h1M305 43h1M305 44h1M333 44h3M305 45h1M334 45h2M333 46h1M335 46h1M329 47h2M332 47h1M328 48h1M331 48h1M327 49h1M332 49h1M327 50h1M332 50h1M328 51h1M331 51h1M329 52h2M346 91h1M340 92h2M345 92h1M342 93h1M345 93h1M342 94h1M345 94h1M341 95h1M345 95h1M341 96h1M345 96h1M340 97h1M345 97h1M340 98h8M345 99h1M627 186h3M626 187h1M630 187h1M625 188h1M631 188h1M625 189h1M631 189h1M625 190h1M631 190h1M626 191h1M630 191h1M624 192h1M626 192h1M630 192h1M625 193h1M631 193h1M632 194h1M91 207h1M90 208h1M80 209h2M89 209h1M82 210h1M89 210h1M83 211h1M89 211h1M83 212h1M89 212h1M122 212h1M83 213h1M89 213h1M121 213h1M82 214h1M89 214h1M111 214h2M120 214h1M82 215h1M89 215h1M113 215h1M120 215h1M81 216h1M89 216h1M114 216h1M120 216h1M81 217h1M89 217h1M106 217h1M114 217h1M120 217h1M80 218h1M89 218h1M105 218h3M114 218h1M120 218h1M80 219h1M89 219h1M106 219h1M113 219h1M120 219h1M79 220h1M89 220h1M113 220h1M120 220h1M79 221h15M112 221h1M120 221h1M89 222h1M112 222h1M120 222h1M137 222h1M89 223h1M111 223h1M120 223h1M136 223h3M111 224h1M120 224h1M137 224h1M110 225h1M120 225h1M110 226h15M624 226h1M626 226h1M628 226h1M120 227h1M625 227h1M627 227h1M629 227h1M120 228h1M625 228h1M627 228h1M629 228h1M625 229h1M627 229h1M629 229h1M625 230h1M627 230h1M629 230h1M625 231h1M627 231h1M629 231h1M632 231h1M625 232h1M627 232h1M629 232h1M632 232h1M625 233h1M627 233h1M629 233h1M631 233h3M630 234h2M26 250h3M24 251h2M29 251h2M64 251h3M24 252h1M30 252h1M65 252h2M23 253h1M31 253h1M64 253h1M66 253h1M23 254h1M27 254h1M31 254h1M60 254h2M63 254h1M23 255h1M31 255h1M59 255h1M62 255h1M24 256h1M30 256h1M58 256h1M63 256h1M24 257h2M29 257h2M58 257h1M63 257h1M26 258h3M59 258h1M62 258h1M60 259h2M624 266h1M632 266h1M625 267h1M631 267h1M626 268h1M630 268h1M626 269h1M630 269h1M624 270h9M626 271h1M630 271h1M626 272h1M630 272h1M625 273h1M631 273h1M29 274h5M624 274h1M632 274h1M28 275h1M34 275h1M27 276h1M35 276h1M26 277h1M36 277h1M25 278h1M37 278h1M25 279h1M37 279h1M25 280h1M37 280h1M25 281h1M37 281h1M25 282h1M37 282h1M26 283h1M36 283h1M27 284h1M35 284h1M27 285h1M35 285h1M23 286h1M27 286h1M35 286h1M24 287h1M26 287h1M36 287h1M25 288h1M37 288h1M38 289h1M39 290h1M316 306h1M315 307h3M316 308h1M335 313h6M339 314h2M338 315h1M340 315h1M337 316h1M340 316h1M627 316h3M336 317h1M340 317h1M625 317h2M630 317h2M304 318h1M335 318h1M340 318h1M625 318h1M631 318h1M303 319h3M327 319h5M334 319h1M624 319h1M632 319h1M304 320h1M326 320h1M332 320h2M624 320h1M628 320h1M632 320h1M325 321h1M333 321h1M624 321h1M632 321h1M324 322h1M334 322h1M625 322h1M631 322h1M324 323h1M334 323h1M625 323h2M630 323h2M324 324h1M334 324h1M627 324h3M324 325h1M334 325h1M324 326h1M334 326h1M315 327h7M325 327h1M333 327h1M339 327h1M314 328h2M321 328h2M326 328h1M332 328h1M338 328h3M312 329h2M323 329h2M327 329h5M339 329h1M312 330h1M324 330h1M311 331h1M325 331h1M310 332h2M325 332h2M310 333h1M326 333h1M310 334h1M326 334h1M359 334h6M310 335h1M318 335h1M326 335h1M363 335h2M310 336h1M326 336h1M362 336h1M364 336h1M310 337h1M326 337h1M361 337h1M364 337h1M310 338h2M325 338h2M360 338h1M364 338h1M311 339h1M325 339h1M359 339h1M364 339h1M312 340h1M324 340h1M351 340h5M358 340h1M312 341h2M323 341h2M350 341h1M356 341h2M314 342h2M321 342h2M324 342h1M349 342h1M357 342h1M315 343h7M323 343h3M348 343h1M358 343h1M324 344h1M348 344h1M358 344h1M348 345h1M358 345h1M348 346h1M358 346h1M348 347h1M358 347h1M349 348h1M357 348h1M350 349h1M356 349h1M351 350h5M334 352h7M333 353h2M340 353h2M331 354h2M342 354h2M331 355h1M343 355h1M330 356h1M344 356h1M630 356h3M329 357h2M344 357h2M631 357h2M329 358h1M345 358h1M630 358h1M632 358h1M329 359h1M345 359h1M626 359h2M629 359h1M329 360h1M337 360h1M345 360h1M625 360h1M628 360h1M329 361h1M345 361h1M624 361h1M629 361h1M329 362h1M345 362h1M624 362h1M629 362h1M329 363h2M344 363h2M625 363h1M628 363h1M330 364h1M344 364h1M626 364h2M331 365h1M343 365h1M331 366h2M342 366h2M631 366h1M333 367h2M340 367h2M625 367h2M630 367h1M334 368h7M627 368h1M630 368h1M627 369h1M630 369h1M626 370h1M630 370h1M626 371h1M630 371h1M625 372h1M630 372h1M625 373h8M630 374h1M334 384h3M332 385h2M337 385h2M332 386h1M338 386h1M331 387h1M339 387h1M331 388h1M335 388h1M339 388h1M331 389h1M339 389h1M384 389h5M332 390h1M338 390h1M387 390h2M332 391h2M337 391h2M386 391h1M388 391h1M334 392h3M385 392h1M388 392h1M384 393h1M388 393h1M383 394h1M374 395h1M382 395h1M375 396h1M381 396h1M376 397h1M380 397h1M377 398h1M379 398h1M378 399h1M377 400h1M379 400h1M376 401h1M380 401h1M375 402h1M381 402h1M374 403h1M382 403h1M373 404h1M372 405h1M361 410h1M355 411h2M360 411h1M357 412h1M360 412h1M357 413h1M360 413h1M356 414h1M360 414h1M356 415h1M360 415h1M355 416h1M360 416h1M355 417h8M360 418h1"/>
<path stroke="rgb(0,255,0)" d="M118 60h1M122 60h1M119 61h3M118 62h1M122 62h1M118 63h1M122 63h1M118 64h1M122 64h1M119 65h3M120 66h1M118 67h5M120 68h1M92 73h1M106 73h1M93 74h1M105 74h1M94 75h11M96 76h1M102 76h1M96 77h1M102 77h1M96 78h1M102 78h1M96 79h1M102 79h1M96 80h1M102 80h1M96 81h1M102 81h1M96 82h1M102 82h1M96 83h1M102 83h1M96 84h1M102 84h1M96 85h1M102 85h1M96 86h1M102 86h1M140 86h1M146 86h1M94 87h11M141 87h1M145 87h1M93 88h1M105 88h1M141 88h1M143 88h1M145 88h1M92 89h1M106 89h1M141 89h5M170 89h1M182 89h1M141 90h1M143 90h1M145 90h1M171 90h1M181 90h1M140 91h1M143 91h1M146 91h1M172 91h1M180 91h1M142 92h3M172 92h1M180 92h1M142 93h1M144 93h1M172 93h1M176 93h1M180 93h1M143 94h1M172 94h1M176 94h1M180 94h1M172 95h9M172 96h1M176 96h1M180 96h1M172 97h1M176 97h1M180 97h1M171 98h1M176 98h1M181 98h1M170 99h1M176 99h1M182 99h1M176 100h1M175 101h3M174 102h1M178 102h1M174 103h1M178 103h1M174 104h1M178 104h1M175 105h3M181 117h1M183 117h1M195 117h1M180 118h3M184 118h1M194 118h1M181 119h1M185 119h1M193 119h1M185 120h1M193 120h1M185 121h1M189 121h1M193 121h1M185 122h1M189 122h1M193 122h1M185 123h9M185 124h1M189 124h1M193 124h1M185 125h1M189 125h1M193 125h1M184 126h1M189 126h1M194 126h1M183 127h1M189 127h1M195 127h1M189 128h1M188 129h3M187 130h1M191 130h1M187 131h1M191 131h1M187 132h1M191 132h1M188 133h3M194 145h1M193 146h3M194 147h1M195 153h1M197 154h1M199 156h1M201 157h1M203 158h1M205 159h1M207 161h1M209 162h1M298 162h2M211 163h1M296 163h2M213 164h1M293 164h3M291 165h2M215 166h1M288 166h3M217 167h1M286 167h2M219 168h1M283 168h3M221 169h1M281 169h2M278 170h3M223 171h1M275 171h3M225 172h1M273 172h2M227 173h1M270 173h3M229 174h1M268 174h2M231 175h1M265 175h3M263 176h2M233 177h1M260 177h3M235 178h1M258 178h2M237 179h1M255 179h3M239 180h1M253 180h2M250 181h3M241 182h1M248 182h2M243 183h1M245 183h3M243 184h3M240 185h3M247 185h1M237 186h3M235 187h2M249 187h1M232 188h3M251 188h1M443 188h1M449 188h1M455 188h1M230 189h2M253 189h1M442 189h2M448 189h2M454 189h1M227 190h3M255 190h1M442 190h1M444 190h1M448 190h1M450 190h1M454 190h1M225 191h2M441 191h1M444 191h1M447 191h1M450 191h1M453 191h1M222 192h3M257 192h1M440 192h1M444 192h1M446 192h1M450 192h1M452 192h1M220 193h2M259 193h1M440 193h1M445 193h2M451 193h2M217 194h3M261 194h1M439 194h1M445 194h1M451 194h1M215 195h2M263 195h1M212 196h3M210 197h2M265 197h1M207 198h3M267 198h1M443 198h1M449 198h1M455 198h1M205 199h2M269 199h1M442 199h2M448 199h2M454 199h1M202 200h3M271 200h1M442 200h1M444 200h1M448 200h1M450 200h1M454 200h1M199 201h3M273 201h1M441 201h1M444 201h1M447 201h1M450 201h1M453 201h1M197 202h2M440 202h1M444 202h1M446 202h1M450 202h1M452 202h1M194 203h3M275 203h1M440 203h1M445 203h2M451 203h2M192 204h2M277 204h1M439 204h1M445 204h1M451 204h1M189 205h3M279 205h1M187 206h2M281 206h1M624 206h1M626 206h1M628 206h1M184 207h3M625 207h1M627 207h1M629 207h1M631 207h1M182 208h2M283 208h1M625 208h1M627 208h1M629 208h3M179 209h3M285 209h1M625 209h1M627 209h1M629 209h1M631 209h1M177 210h2M287 210h1M625 210h1M627 210h1M629 210h1M631 210h1M174 211h3M289 211h1M625 211h1M627 211h1M629 211h1M631 211h1M172 212h2M625 212h1M627 212h1M629 212h1M631 212h1M169 213h3M291 213h1M625 213h1M627 213h1M630 213h1M167 214h2M293 214h1M629 214h1M631 214h1M164 215h3M295 215h1M161 216h3M297 216h1M159 217h2M156 218h3M299 218h1M154 219h2M301 219h1M151 220h3M303 220h1M448 220h1M454 220h1M149 221h2M305 221h1M449 221h1M453 221h1M146 222h3M307 222h1M449 222h1M451 222h1M453 222h1M144 223h2M449 223h5M142 224h2M309 224h1M449 224h1M451 224h1M453 224h1M311 225h1M448 225h1M451 225h1M454 225h1M313 226h1M450 226h3M145 227h1M315 227h1M450 227h1M452 227h1M451 228h1M148 229h1M317 229h1M319 230h1M321 231h1M151 232h1M323 232h1M154 234h1M325 234h1M327 235h1M329 236h1M157 237h1M331 237h1M160 239h1M333 239h1M335 240h1M337 241h1M163 242h1M166 244h1M626 246h1M629 246h1M632 246h1M169 247h1M625 247h2M628 247h2M631 247h1M625 248h1M627 248h2M630 248h2M172 249h1M624 249h1M627 249h1M630 249h1M626 251h1M629 251h1M632 251h1M175 252h1M625 252h2M628 252h2M631 252h1M625 253h1M627 253h2M630 253h2M178 254h1M624 254h1M627 254h1M630 254h1M181 257h1M184 259h1M187 262h1M190 264h1M193 267h1M196 269h1M199 272h1M202 274h1M205 277h1M208 279h1M211 282h1M214 284h1M625 286h1M631 286h1M217 287h1M626 287h1M630 287h1M627 288h3M220 289h1M626 289h1M630 289h1M625 290h1M631 290h1M625 291h1M631 291h1M223 292h1M625 292h1M631 292h1M626 293h1M630 293h1M226 294h1M627 294h3M229 297h1M232 299h1M235 302h1M238 304h1M400 305h1M404 305h1M401 306h3M241 307h1M400 307h1M404 307h1M400 308h1M404 308h1M244 309h1M400 309h1M404 309h1M401 310h3M402 311h1M247 312h1M400 312h5M402 313h1M250 314h1M253 317h1M256 319h1M259 322h1M262 324h1M265 327h1M268 329h1M273 335h1M272 336h3M626 336h1M630 336h1M273 337h1M627 337h3M626 338h1M630 338h1M626 339h1M630 339h1M626 340h1M630 340h1M627 341h3M628 342h1M626 343h5M628 344h1M276 348h1M284 348h1M277 349h1M283 349h1M278 350h5M277 351h1M283 351h1M276 352h1M284 352h1M276 353h1M284 353h1M62 354h1M66 354h1M276 354h1M284 354h1M63 355h3M276 355h1M284 355h1M62 356h1M66 356h1M276 356h1M284 356h1M62 357h1M66 357h1M277 357h1M283 357h1M62 358h1M66 358h1M278 358h5M63 359h3M280 359h1M64 360h1M280 360h1M62 361h5M280 361h1M64 362h1M276 362h9M280 363h1M280 364h1M283 365h1M282 366h3M283 367h1M286 378h1M294 378h1M133 379h1M137 379h1M287 379h1M293 379h1M134 380h3M288 380h5M133 381h1M137 381h1M287 381h1M293 381h1M133 382h1M137 382h1M286 382h1M294 382h1M133 383h1M137 383h1M286 383h1M294 383h1M134 384h3M286 384h1M294 384h1M135 385h1M286 385h1M294 385h1M133 386h5M286 386h1M294 386h1M625 386h1M631 386h1M135 387h1M287 387h1M293 387h1M626 387h1M630 387h1M288 388h5M626 388h1M628 388h1M630 388h1M290 389h1M626 389h5M290 390h1M626 390h1M628 390h1M630 390h1M290 391h1M625 391h1M628 391h1M631 391h1M286 392h9M627 392h3M290 393h1M627 393h1M629 393h1M290 394h1M628 394h1M171 437h5M170 438h1M176 438h1M169 439h1M177 439h1M169 440h1M177 440h1M169 441h1M177 441h1M170 442h1M176 442h1M165 443h7M175 443h7M165 447h17"/>
<path stroke="rgb(255,255,0)" d="M190 23h1M202 23h1M223 23h3M191 24h1M201 24h1M222 24h1M226 24h1M191 25h1M201 25h1M222 25h1M226 25h1M192 26h1M199 26h2M222 26h1M226 26h1M193 27h6M223 27h3M192 28h2M199 28h2M224 28h1M191 29h2M200 29h2M222 29h5M191 30h1M201 30h1M224 30h1M190 31h1M202 31h1M224 31h1M190 32h1M202 32h1M190 33h1M202 33h1M190 34h1M202 34h1M190 35h1M202 35h1M191 36h1M201 36h1M191 37h2M200 37h2M192 38h2M199 38h2M194 39h5M248 58h1M246 59h5M248 60h1M248 61h1M250 61h2M248 62h2M252 62h1M248 63h1M252 63h1M248 64h1M251 64h1M248 65h1M251 65h1M252 66h1M338 112h1M338 113h1M334 114h9M338 115h1M338 116h1M338 117h1M338 118h1M342 118h3M338 119h1M341 119h1M345 119h1M338 120h3M346 120h1M338 121h1M346 121h1M338 122h1M346 122h1M338 123h1M345 123h1M338 124h1M344 124h1M338 125h1M344 125h1M338 126h1M344 126h1M345 127h1M346 128h1M322 132h1M321 133h3M322 134h1M318 137h1M318 138h1M314 139h9M318 140h1M318 141h1M318 142h1M318 143h1M322 143h3M318 144h1M321 144h1M325 144h1M318 145h3M326 145h1M318 146h1M326 146h1M318 147h1M326 147h1M318 148h1M325 148h1M318 149h1M324 149h1M318 150h1M324 150h1M195 151h3M318 151h1M324 151h1M193 152h2M325 152h1M326 153h1M302 157h1M301 158h3M302 159h1M627 196h3M626 197h1M630 197h1M625 198h1M631 198h1M625 199h1M631 199h1M625 200h1M631 200h1M626 201h1M630 201h1M624 202h1M626 202h1M630 202h1M625 203h1M631 203h1M632 204h1M415 219h3M414 220h1M418 220h1M414 221h1M418 221h1M414 222h1M418 222h1M415 223h3M416 224h1M414 225h5M416 226h1M416 227h1M625 236h1M628 236h1M630 236h2M624 237h2M628 237h2M632 237h1M625 238h1M627 238h1M629 238h1M632 238h1M625 239h1M627 239h1M630 239h2M625 240h1M627 240h1M631 240h1M626 241h1M632 241h1M626 242h1M632 242h1M626 243h1M632 243h1M631 244h1M625 276h2M630 276h2M624 277h1M627 277h1M629 277h1M632 277h1M624 278h1M627 278h1M629 278h1M632 278h1M625 279h1M627 279h1M629 279h1M631 279h1M628 280h1M628 281h1M628 282h1M628 283h1M628 284h1M435 297h1M442 297h1M445 297h4M435 298h1M441 298h2M449 298h1M434 299h2M441 299h1M443 299h1M449 299h1M433 300h1M435 300h1M440 300h1M444 300h1M449 300h1M435 301h1M440 301h1M444 301h1M449 301h1M435 302h1M439 302h1M445 302h1M448 302h1M435 303h1M439 303h1M446 303h2M312 304h1M435 304h1M438 304h1M446 304h2M435 305h1M438 305h1M447 305h1M436 306h2M448 306h1M437 307h1M449 307h1M437 308h1M449 308h1M437 309h1M449 309h1M437 310h1M449 310h1M437 311h1M449 311h1M448 312h1M447 313h1M301 315h1M81 317h3M80 318h1M84 318h1M80 319h1M84 319h1M80 320h1M84 320h1M81 321h3M82 322h1M80 323h5M82 324h1M82 325h1M292 326h1M291 327h3M429 327h1M292 328h1M427 328h5M429 329h1M429 330h1M431 330h2M429 331h2M433 331h1M271 332h1M429 332h1M433 332h1M429 333h1M432 333h1M429 334h1M432 334h1M433 335h1M301 338h5M300 339h1M306 339h1M299 340h1M307 340h1M299 341h1M307 341h1M299 342h1M307 342h1M299 343h1M307 343h1M299 344h1M307 344h1M300 345h1M306 345h1M301 346h5M627 346h3M303 347h1M626 347h1M630 347h1M303 348h1M626 348h1M630 348h1M303 349h1M626 349h1M630 349h1M299 350h9M627 350h3M303 351h1M628 351h1M303 352h1M626 352h5M303 353h1M308 353h1M628 353h1M303 354h1M307 354h3M628 354h1M308 355h1M317 365h5M316 366h1M322 366h1M315 367h1M323 367h1M315 368h1M323 368h1M315 369h1M323 369h1M315 370h1M323 370h1M315 371h1M323 371h1M73 372h1M77 372h1M81 372h1M316 372h1M322 372h1M74 373h1M76 373h1M78 373h1M80 373h1M82 373h1M317 373h5M75 374h1M79 374h1M83 374h1M87 374h1M319 374h1M75 375h1M79 375h1M83 375h1M86 375h2M319 375h1M75 376h1M79 376h1M83 376h1M85 376h1M87 376h1M319 376h1M627 376h1M75 377h1M79 377h1M83 377h2M87 377h1M315 377h9M625 377h5M75 378h1M79 378h1M83 378h1M87 378h1M319 378h1M627 378h1M75 379h1M79 379h1M83 379h1M87 379h1M319 379h1M627 379h1M629 379h2M75 380h1M79 380h1M83 380h1M87 380h1M319 380h1M627 380h2M631 380h1M75 381h1M79 381h1M83 381h1M87 381h1M319 381h1M627 381h1M631 381h1M75 382h1M79 382h1M83 382h1M87 382h1M627 382h1M630 382h1M75 383h1M79 383h1M83 383h1M87 383h1M627 383h1M630 383h1M75 384h1M79 384h1M83 384h1M87 384h1M631 384h1M75 385h1M79 385h1M84 385h1M86 385h1M75 386h1M79 386h1M85 386h1M84 387h1M86 387h1M83 388h1M87 388h1M146 426h3M145 427h1M149 427h1M145 428h1M149 428h1M145 429h1M149 429h1M146 430h3M147 431h1M145 432h5M147 433h1M147 434h1"/>
<path stroke="rgb(0,0,255)" d="M389 90h1M405 90h1M390 91h1M404 91h1M391 92h1M403 92h1M392 93h1M402 93h1M393 94h1M401 94h1M393 95h1M401 95h1M393 96h1M401 96h1M393 97h1M401 97h1M154 98h5M389 98h17M153 99h1M159 99h2M393 99h1M401 99h1M152 100h1M161 100h1M317 100h1M323 100h1M329 100h1M393 100h1M401 100h1M153 101h1M162 101h1M317 101h1M323 101h1M329 101h1M393 101h1M401 101h1M154 102h1M163 102h1M316 102h3M321 102h5M328 102h3M393 102h1M401 102h1M155 103h1M163 103h1M317 103h1M323 103h1M329 103h1M392 103h1M402 103h1M156 104h1M164 104h1M317 104h1M323 104h1M329 104h1M391 104h1M403 104h1M156 105h1M164 105h1M318 105h1M323 105h1M328 105h1M390 105h1M404 105h1M156 106h1M164 106h1M318 106h1M323 106h1M328 106h1M389 106h1M405 106h1M156 107h1M164 107h1M319 107h2M323 107h1M326 107h2M156 108h1M164 108h1M321 108h5M155 109h1M163 109h1M323 109h1M154 110h1M163 110h1M323 110h1M153 111h1M162 111h1M323 111h1M152 112h1M161 112h1M319 112h9M153 113h1M159 113h2M323 113h1M154 114h5M323 114h1M323 115h1M323 116h1M411 116h1M414 116h1M417 116h1M410 117h2M413 117h3M417 117h2M411 118h1M414 118h1M417 118h1M176 119h1M412 119h1M414 119h1M416 119h1M175 120h3M413 120h3M176 121h1M414 121h1M412 122h5M414 123h1M414 124h1M169 126h5M300 126h1M306 126h1M312 126h1M314 126h1M168 127h1M174 127h2M300 127h1M306 127h1M312 127h4M167 128h1M176 128h1M299 128h3M304 128h5M311 128h4M168 129h1M177 129h1M300 129h1M306 129h1M312 129h1M169 130h1M178 130h1M300 130h1M306 130h1M312 130h1M170 131h1M178 131h1M301 131h1M306 131h1M311 131h1M171 132h1M179 132h1M301 132h1M306 132h1M311 132h1M171 133h1M179 133h1M302 133h2M306 133h1M309 133h2M171 134h1M179 134h1M304 134h5M171 135h1M179 135h1M306 135h1M171 136h1M179 136h1M306 136h1M170 137h1M178 137h1M306 137h1M169 138h1M178 138h1M302 138h9M168 139h1M177 139h1M306 139h1M167 140h1M176 140h1M306 140h1M168 141h1M174 141h2M306 141h1M169 142h5M306 142h1M46 143h3M45 144h1M49 144h2M46 145h1M50 145h1M47 146h1M51 146h1M47 147h1M51 147h1M191 147h1M47 148h1M51 148h1M190 148h3M46 149h1M50 149h1M191 149h1M45 150h1M49 150h2M46 151h3M296 153h1M393 153h1M396 153h1M399 153h1M295 154h3M393 154h1M395 154h1M397 154h1M399 154h1M195 155h1M296 155h1M393 155h1M396 155h1M399 155h1M195 156h1M394 156h1M398 156h1M395 157h3M396 158h1M197 159h1M394 159h5M197 160h1M396 160h1M396 161h1M199 163h1M200 164h1M73 165h1M76 165h1M79 165h1M35 166h5M72 166h2M75 166h3M79 166h2M34 167h1M40 167h1M73 167h1M76 167h1M79 167h1M201 167h1M31 168h3M41 168h3M74 168h1M76 168h1M78 168h1M202 168h1M30 169h1M40 169h1M44 169h1M75 169h3M29 170h1M39 170h1M45 170h1M76 170h1M39 171h1M45 171h1M74 171h5M204 171h1M31 172h3M39 172h1M45 172h1M76 172h1M204 172h1M30 173h1M34 173h1M40 173h1M44 173h1M76 173h1M29 174h1M35 174h1M41 174h3M29 175h1M35 175h1M206 175h1M29 176h1M35 176h1M45 176h1M206 176h1M30 177h1M34 177h1M44 177h1M31 178h3M41 178h3M34 179h1M40 179h1M208 179h1M35 180h5M209 180h1M210 183h1M211 184h1M213 187h1M213 188h1M215 191h1M215 192h1M217 195h1M218 196h1M219 199h1M220 200h1M222 203h1M222 204h1M224 207h1M224 208h1M226 211h1M227 212h1M228 215h1M229 216h1M627 218h3M231 219h1M626 219h1M630 219h1M231 220h1M626 220h1M630 220h1M624 221h4M629 221h4M233 223h1M624 223h9M233 224h1M235 227h1M236 228h1M237 231h1M238 232h1M357 234h1M362 234h3M369 234h1M389 234h1M394 234h3M401 234h1M240 235h1M357 235h1M361 235h1M365 235h1M369 235h1M389 235h1M393 235h1M397 235h1M401 235h1M240 236h1M357 236h1M361 236h1M365 236h1M369 236h1M389 236h1M393 236h1M397 236h1M401 236h1M357 237h1M361 237h1M365 237h1M369 237h1M389 237h1M393 237h1M397 237h1M401 237h1M357 238h1M362 238h3M369 238h1M389 238h1M394 238h3M401 238h1M242 239h1M358 239h1M368 239h1M390 239h1M400 239h1M242 240h1M342 240h1M358 240h1M368 240h1M390 240h1M400 240h1M341 241h3M359 241h1M366 241h2M373 241h1M391 241h1M398 241h2M342 242h1M360 242h6M372 242h3M392 242h6M244 243h1M363 243h1M373 243h1M395 243h1M245 244h1M363 244h1M395 244h1M363 245h1M395 245h1M359 246h9M391 246h9M246 247h1M363 247h1M395 247h1M247 248h1M363 248h1M395 248h1M363 249h1M395 249h1M363 250h1M395 250h1M249 251h1M249 252h1M251 255h1M251 256h1M626 256h1M629 256h1M632 256h1M625 257h2M628 257h2M631 257h1M625 258h1M627 258h2M630 258h2M253 259h1M624 259h1M627 259h1M630 259h1M254 260h1M626 261h1M629 261h1M632 261h1M625 262h2M628 262h2M631 262h1M255 263h1M625 263h1M627 263h2M630 263h2M256 264h1M624 264h1M627 264h1M630 264h1M258 267h1M258 268h1M260 271h1M260 272h1M262 275h1M263 276h1M264 279h1M265 280h1M267 283h1M267 284h1M269 287h1M269 288h1M271 291h1M272 292h1M273 295h1M274 296h1M627 297h3M625 298h2M630 298h2M276 299h1M624 299h1M629 299h1M632 299h1M276 300h1M625 300h2M629 300h1M632 300h1M624 301h1M627 301h1M630 301h2M624 302h1M627 302h1M632 302h1M278 303h1M625 303h2M630 303h2M278 304h1M627 304h3M280 307h1M281 308h1M282 311h1M283 312h1M285 315h1M285 316h1M287 319h1M287 320h1M289 323h1M626 326h3M625 327h1M629 327h2M626 328h1M630 328h1M627 329h1M631 329h1M627 330h1M631 330h1M627 331h1M631 331h1M626 332h1M630 332h1M625 333h1M629 333h2M626 334h3M625 396h1M628 396h1M631 396h1M624 397h2M627 397h3M631 397h2M625 398h1M628 398h1M631 398h1M626 399h1M628 399h1M630 399h1M627 400h3M628 401h1M626 402h5M628 403h1M628 404h1M625 406h1M628 406h1M631 406h1M625 407h1M627 407h1M629 407h1M631 407h1M625 408h1M628 408h1M631 408h1M626 409h1M630 409h1M627 410h3M628 411h1M227 412h3M626 412h5M226 413h1M230 413h2M628 413h1M227 414h1M231 414h1M628 414h1M228 415h1M232 415h1M228 416h1M232 416h1M228 417h1M232 417h1M227 418h1M231 418h1M226 419h1M230 419h2M227 420h3M274 439h1M278 439h1M282 439h1M275 440h1M277 440h1M279 440h1M281 440h1M283 440h1M276 441h1M280 441h1M284 441h1M276 442h1M280 442h1M284 442h1M276 443h1M280 443h1M284 443h1M276 444h1M280 444h1M284 444h1M276 445h1M280 445h1M284 445h1M276 446h1M280 446h1M284 446h1M251 447h1M254 447h1M257 447h1M276 447h1M280 447h1M284 447h1M251 448h1M253 448h1M255 448h1M257 448h1M276 448h1M280 448h1M284 448h1M251 449h1M254 449h1M257 449h1M276 449h1M280 449h1M284 449h1M252 450h1M256 450h1M276 450h1M280 450h1M284 450h1M289 450h1M253 451h3M276 451h1M280 451h1M284 451h1M288 451h3M254 452h1M276 452h1M280 452h1M284 452h1M289 452h1M252 453h5M276 453h1M280 453h1M284 453h1M289 453h1M254 454h1M285 454h1M288 454h1M254 455h1M286 455h2"/>
<path stroke="rgb(0,255,255)" d="M198 151h6M195 152h1M197 152h1M199 152h1M201 152h1M204 152h14M203 153h1M205 153h1M207 153h1M209 153h1M211 153h1M213 153h1M215 153h1M217 153h15M219 154h1M221 154h1M223 154h1M225 154h1M227 154h1M229 154h1M231 154h15M237 155h1M239 155h1M241 155h1M243 155h1M245 155h15M253 156h1M255 156h1M257 156h1M259 156h15M269 157h1M271 157h1M273 157h15M287 158h8M336 243h1M335 245h1M333 247h1M332 249h1M331 251h1M330 253h1M329 255h1M328 257h1M326 259h1M325 261h1M324 263h1M323 265h1M322 267h1M321 269h1M319 271h1M318 273h1M317 275h1M316 277h1M315 279h1M314 281h1M312 283h1M311 285h1M310 287h1M309 289h1M308 291h1M307 293h1M305 295h1M304 297h1M303 299h1M302 301h1M301 303h1M300 305h1M298 307h1M297 309h1M296 311h1M295 313h1M294 315h1M293 317h1M291 319h1M290 321h1"/>
</g>
</svg>
<b class="h" style="left:45px;top:264px;color:rgb(255,0,0)">1</b>
<b class="h" style="left:71px;top:330px;color:rgb(255,255,0)">2</b>
<b class="h" style="left:136px;top:389px;color:rgb(0,255,0)">3</b>
<b class="h" style="left:237px;top:408px;color:rgb(0,0,255)">4</b>
<b class="h" style="left:337px;top:365px;color:rgb(255,0,0)">5</b>
<b class="h" style="left:390px;top:279px;color:rgb(255,255,0)">6</b>
<b class="h" style="left:393px;top:200px;color:rgb(0,255,0)">7</b>
<b class="h" style="left:367px;top:134px;color:rgb(0,0,255)">8</b>
<b class="h" style="left:302px;top:75px;color:rgb(255,0,0)">9</b>
<b class="h" style="left:202px;top:56px;color:rgb(255,255,0)">10</b>
<b class="h" style="left:102px;top:99px;color:rgb(0,255,0)">11</b>
<b class="h" style="left:49px;top:185px;color:rgb(0,0,255)">12</b>
<pre><span style="color:rgb(255,255,255)">Astrolog 5.41G</span>
<span style="color:rgb(191,191,191)">Inner ring:</span>
<span style="color:rgb(191,191,191)">Chart of the Moment</span>
<span style="color:rgb(255,255,255)">Wed December 3, 2025</span>
<span style="color:rgb(255,255,255)"> 8:35:00pm (ST -8:00 GMT)</span>
<span style="color:rgb(191,191,191)">San Francisco, CA</span>
<span style="color:rgb(191,191,191)">122°40'00"W 37°79'00"N</span>
<span style="color:rgb(191,191,191)">Outer ring - Transit:</span>
<span style="color:rgb(255,255,0)">Thu December 4, 2025</span>
<span style="color:rgb(255,255,0)"> 6:35:46am (ST +2:00 GMT)</span>
<span style="color:rgb(191,191,191)"> 26°43'00"E 58°23'00"N</span>
<span style="color:rgb(191,191,191)">Placidus houses.</span>
<span style="color:rgb(191,191,191)">Tropical, Geocentric.</span>
<span style="color:rgb(255,255,0)">Julian Day = 2461013.6915</span>
<span style="color:rgb(191,191,191)">Obliquity = 23°26'09"</span>
<span style="color:rgb(191,191,191)">Sidereal time: 11:15:38</span>
<span style="color:rgb(191,191,191)">DeltaT =  95.1245</span>

<span style="color:rgb(255,0,0)"> 1st house: </span><span style="color:rgb(255,0,0)"> 3Leo13</span>
<span style="color:rgb(255,255,0)"> 2nd house: </span><span style="color:rgb(255,0,0)">24Leo17</span>
<span style="color:rgb(0,255,0)"> 3rd house: </span><span style="color:rgb(255,255,0)">19Vir35</span>
<span style="color:rgb(0,0,255)"> 4th house: </span><span style="color:rgb(0,255,0)">20Lib56</span>
<span style="color:rgb(255,0,0)"> 5th house: </span><span style="color:rgb(0,0,255)">27Sco02</span>
<span style="color:rgb(255,255,0)"> 6th house: </span><span style="color:rgb(255,255,0)"> 2Cap27</span>
<span style="color:rgb(0,255,0)"> 7th house: </span><span style="color:rgb(0,255,0)"> 3Aqu13</span>
<span style="color:rgb(0,0,255)"> 8th house: </span><span style="color:rgb(0,255,0)">24Aqu17</span>
<span style="color:rgb(255,0,0)"> 9th house: </span><span style="color:rgb(0,0,255)">19Pis35</span>
<span style="color:rgb(255,255,0)">10th house: </span><span style="color:rgb(255,0,0)">20Ari56</span>
<span style="color:rgb(0,255,0)">11th house: </span><span style="color:rgb(255,255,0)">27Tau02</span>
<span style="color:rgb(0,0,255)">12th house: </span><span style="color:rgb(0,0,255)"> 2Can27</span>

<span style="color:rgb(255,0,0)"> Sun: </span><span style="color:rgb(255,0,0)">12Sag16</span><span style="color:rgb(255,255,255)"> </span><span style="color:rgb(191,191,191)"> + 0°00'</span>
<span style="color:rgb(0,0,255)">Moon: </span><span style="color:rgb(0,255,0)"> 1Gem09</span><span style="color:rgb(255,255,255)"> </span><span style="color:rgb(191,191,191)"> + 4°53'</span>
<span style="color:rgb(0,255,0)">Merc: </span><span style="color:rgb(0,0,255)">22Sco17</span><span style="color:rgb(255,255,255)"> </span><span style="color:rgb(191,191,191)"> + 2°34'</span>
<span style="color:rgb(255,255,0)">Venu: </span><span style="color:rgb(255,0,0)"> 4Sag13</span><span style="color:rgb(255,255,255)"> </span><span style="color:rgb(191,191,191)"> + 0°35'</span>
<span style="color:rgb(255,0,0)">Mars: </span><span style="color:rgb(255,0,0)">21Sag40</span><span style="color:rgb(255,255,255)"> </span><span style="color:rgb(191,191,191)"> - 0°41'</span>
<span style="color:rgb(255,0,0)">Jupi: </span><span style="color:rgb(0,0,255)">24Can19</span><span style="color:rgb(255,255,255)">R</span><span style="color:rgb(191,191,191)"> + 0°10'</span>
<span style="color:rgb(255,255,0)">Satu: </span><span style="color:rgb(0,0,255)">25Pis11</span><span style="color:rgb(255,255,255)"> </span><span style="color:rgb(191,191,191)"> - 2°21'</span>
<span style="color:rgb(0,255,0)">Uran: </span><span style="color:rgb(255,255,0)">28Tau55</span><span style="color:rgb(255,255,255)">R</span><span style="color:rgb(191,191,191)"> - 0°12'</span>
<span style="color:rgb(0,0,255)">Nept: </span><span style="color:rgb(0,0,255)">29Pis23</span><span style="color:rgb(255,255,255)">R</span><span style="color:rgb(191,191,191)"> - 1°21'</span>
<span style="color:rgb(0,0,255)">Plut: </span><span style="color:rgb(0,255,0)"> 1Aqu58</span><span style="color:rgb(255,255,255)"> </span><span style="color:rgb(191,191,191)"> - 3°46'</span>

<span style="color:rgb(191,191,191)">Fire: 3, Earth: 1,</span>
<span style="color:rgb(191,191,191)">Air : 2, Water: 4</span>
<span style="color:rgb(191,191,191)">Car: 1, Fix: 3, Mut: 6</span>
<span style="color:rgb(191,191,191)">Yang: 5, Yin: 5</span>
<span style="color:rgb(191,191,191)">M: 5, N: 5, A: 3, D: 7</span></pre>
</div></body></html>
